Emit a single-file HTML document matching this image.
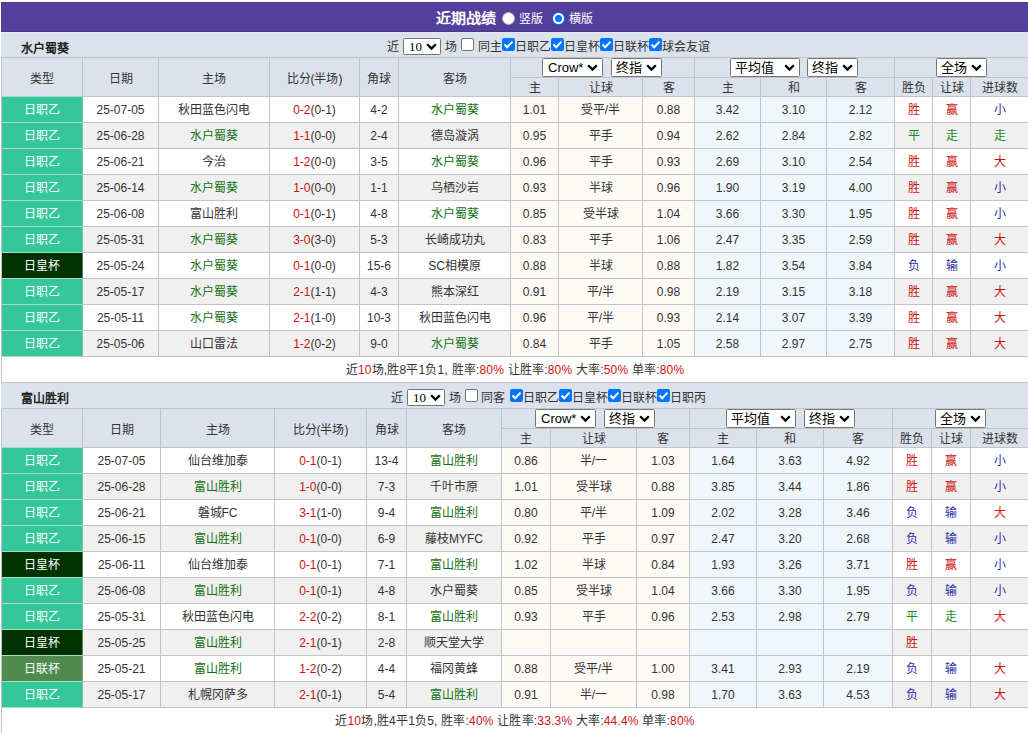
<!DOCTYPE html><html lang="zh-CN"><head><meta charset="utf-8"><style>html,body{margin:0;padding:0;background:#fff;width:1028px;height:733px;overflow:hidden;position:relative;font-family:"Liberation Sans",sans-serif;}.t{position:absolute;text-align:center;white-space:nowrap;overflow:visible}</style></head><body>
<div style="position:absolute;left:1px;top:2px;width:1027px;height:30px;background:#52409c;border-top:1px solid #463c84;border-left:1px solid #463c84;border-bottom:1px solid #463c84;box-sizing:border-box;"></div>
<div style="position:absolute;left:1px;top:32px;width:1027px;height:1px;background:#e4e4fa;"></div>
<div class="t" style="left:436px;top:4px;height:28px;line-height:28px;font-size:15px;font-weight:bold;color:#fff;text-align:left;transform:scaleY(0.9);transform-origin:50% 50%">近期战绩</div>
<div style="position:absolute;left:501.5px;top:12px;width:13px;height:13px;border-radius:50%;background:#fff;box-sizing:border-box;border:1px solid #b0b0c0"></div>
<div class="t" style="left:519px;top:4.5px;height:28px;line-height:28px;font-size:12px;color:#fff;text-align:left">竖版</div>
<div style="position:absolute;left:552px;top:12px;width:13px;height:13px;border-radius:50%;background:#0075ff;"><div style="position:absolute;left:1.2px;top:1.2px;width:10.6px;height:10.6px;border-radius:50%;background:#fff"></div><div style="position:absolute;left:3px;top:3px;width:7px;height:7px;border-radius:50%;background:#0075ff"></div></div>
<div class="t" style="left:569px;top:4.5px;height:28px;line-height:28px;font-size:12px;color:#fff;text-align:left">横版</div>
<div style="position:absolute;left:1px;top:33px;width:1027px;height:24px;background:#dce2eb;"></div>
<div class="t" style="left:21px;top:36.5px;width:100px;height:24px;line-height:24px;color:#222;font-size:12px;font-weight:bold;text-align:left;">水户蜀葵</div>
<div class="t" style="left:387px;top:35px;height:24px;line-height:24px;font-size:12px;color:#333;text-align:left;white-space:nowrap">近</div>
<div style="position:absolute;left:403px;top:38px;width:36px;height:15px;border:1px solid #767676;border-radius:1.5px;background:#fff;"><span style="position:absolute;left:5px;top:0px;line-height:15px;font-size:13px;color:#000;font-family:'Liberation Serif',serif;white-space:nowrap">10</span><svg width="11" height="8" viewBox="0 0 11 8" style="position:absolute;right:3px;top:3.5px"><path d="M1.2 1.3 L5.5 5.6 L9.8 1.3" fill="none" stroke="#000" stroke-width="2.3"/></svg></div>
<div class="t" style="left:445px;top:35px;height:24px;line-height:24px;font-size:12px;color:#333;text-align:left;white-space:nowrap">场</div>
<div style="position:absolute;left:461px;top:38px;width:11px;height:11px;background:#fff;border:1px solid #767676;border-radius:2px;"></div>
<div class="t" style="left:478px;top:35px;height:24px;line-height:24px;font-size:12px;color:#333;text-align:left;white-space:nowrap">同主</div>
<div style="position:absolute;left:502px;top:38px;width:13px;height:13px;background:#0075ff;border-radius:2px;"><svg width="13" height="13" viewBox="0 0 13 13" style="position:absolute;left:0;top:0"><path d="M2.5 6.5 L5.2 9.2 L10.5 3.6" fill="none" stroke="#fff" stroke-width="2"/></svg></div>
<div class="t" style="left:515px;top:35px;height:24px;line-height:24px;font-size:12px;color:#333;text-align:left;white-space:nowrap">日职乙</div>
<div style="position:absolute;left:551px;top:38px;width:13px;height:13px;background:#0075ff;border-radius:2px;"><svg width="13" height="13" viewBox="0 0 13 13" style="position:absolute;left:0;top:0"><path d="M2.5 6.5 L5.2 9.2 L10.5 3.6" fill="none" stroke="#fff" stroke-width="2"/></svg></div>
<div class="t" style="left:564px;top:35px;height:24px;line-height:24px;font-size:12px;color:#333;text-align:left;white-space:nowrap">日皇杯</div>
<div style="position:absolute;left:600px;top:38px;width:13px;height:13px;background:#0075ff;border-radius:2px;"><svg width="13" height="13" viewBox="0 0 13 13" style="position:absolute;left:0;top:0"><path d="M2.5 6.5 L5.2 9.2 L10.5 3.6" fill="none" stroke="#fff" stroke-width="2"/></svg></div>
<div class="t" style="left:613px;top:35px;height:24px;line-height:24px;font-size:12px;color:#333;text-align:left;white-space:nowrap">日联杯</div>
<div style="position:absolute;left:649px;top:38px;width:13px;height:13px;background:#0075ff;border-radius:2px;"><svg width="13" height="13" viewBox="0 0 13 13" style="position:absolute;left:0;top:0"><path d="M2.5 6.5 L5.2 9.2 L10.5 3.6" fill="none" stroke="#fff" stroke-width="2"/></svg></div>
<div class="t" style="left:662px;top:35px;height:24px;line-height:24px;font-size:12px;color:#333;text-align:left;white-space:nowrap">球会友谊</div>
<div style="position:absolute;left:1px;top:57px;width:1028px;height:39px;background:#dce2eb;"></div>
<div style="position:absolute;left:1px;top:57px;width:1028px;height:1px;background:#c0c3c8;"></div>
<div style="position:absolute;left:510px;top:77px;width:518px;height:1px;background:#c0c3c8;"></div>
<div style="position:absolute;left:1px;top:96px;width:1028px;height:1px;background:#c0c3c8;"></div>
<div style="position:absolute;left:1px;top:57px;width:1px;height:39px;background:#c0c3c8;"></div>
<div style="position:absolute;left:82px;top:57px;width:1px;height:39px;background:#c0c3c8;"></div>
<div style="position:absolute;left:158px;top:57px;width:1px;height:39px;background:#c0c3c8;"></div>
<div style="position:absolute;left:269px;top:57px;width:1px;height:39px;background:#c0c3c8;"></div>
<div style="position:absolute;left:359px;top:57px;width:1px;height:39px;background:#c0c3c8;"></div>
<div style="position:absolute;left:398px;top:57px;width:1px;height:39px;background:#c0c3c8;"></div>
<div style="position:absolute;left:510px;top:57px;width:1px;height:39px;background:#c0c3c8;"></div>
<div style="position:absolute;left:694px;top:57px;width:1px;height:39px;background:#c0c3c8;"></div>
<div style="position:absolute;left:894px;top:57px;width:1px;height:39px;background:#c0c3c8;"></div>
<div style="position:absolute;left:558px;top:77px;width:1px;height:19px;background:#c0c3c8;"></div>
<div style="position:absolute;left:642px;top:77px;width:1px;height:19px;background:#c0c3c8;"></div>
<div style="position:absolute;left:760px;top:77px;width:1px;height:19px;background:#c0c3c8;"></div>
<div style="position:absolute;left:826px;top:77px;width:1px;height:19px;background:#c0c3c8;"></div>
<div style="position:absolute;left:932px;top:77px;width:1px;height:19px;background:#c0c3c8;"></div>
<div style="position:absolute;left:970px;top:77px;width:1px;height:19px;background:#c0c3c8;"></div>
<div class="t" style="left:2px;top:60px;width:80px;height:38px;line-height:38px;color:#333;font-size:12px;font-weight:normal;">类型</div>
<div class="t" style="left:83px;top:60px;width:75px;height:38px;line-height:38px;color:#333;font-size:12px;font-weight:normal;">日期</div>
<div class="t" style="left:159px;top:60px;width:110px;height:38px;line-height:38px;color:#333;font-size:12px;font-weight:normal;">主场</div>
<div class="t" style="left:270px;top:60px;width:89px;height:38px;line-height:38px;color:#333;font-size:12px;font-weight:normal;">比分(半场)</div>
<div class="t" style="left:360px;top:60px;width:38px;height:38px;line-height:38px;color:#333;font-size:12px;font-weight:normal;">角球</div>
<div class="t" style="left:399px;top:60px;width:111px;height:38px;line-height:38px;color:#333;font-size:12px;font-weight:normal;">客场</div>
<div class="t" style="left:511px;top:78.5px;width:47px;height:18px;line-height:18px;color:#333;font-size:12px;font-weight:normal;">主</div>
<div class="t" style="left:559px;top:78.5px;width:83px;height:18px;line-height:18px;color:#333;font-size:12px;font-weight:normal;">让球</div>
<div class="t" style="left:643px;top:78.5px;width:51px;height:18px;line-height:18px;color:#333;font-size:12px;font-weight:normal;">客</div>
<div class="t" style="left:695px;top:78.5px;width:65px;height:18px;line-height:18px;color:#333;font-size:12px;font-weight:normal;">主</div>
<div class="t" style="left:761px;top:78.5px;width:65px;height:18px;line-height:18px;color:#333;font-size:12px;font-weight:normal;">和</div>
<div class="t" style="left:827px;top:78.5px;width:67px;height:18px;line-height:18px;color:#333;font-size:12px;font-weight:normal;">客</div>
<div class="t" style="left:895px;top:78.5px;width:37px;height:18px;line-height:18px;color:#333;font-size:12px;font-weight:normal;">胜负</div>
<div class="t" style="left:933px;top:78.5px;width:37px;height:18px;line-height:18px;color:#333;font-size:12px;font-weight:normal;">让球</div>
<div class="t" style="left:971px;top:78.5px;width:57px;height:18px;line-height:18px;color:#333;font-size:12px;font-weight:normal;">进球数</div>
<div style="position:absolute;left:542px;top:58px;width:59px;height:17px;border:1px solid #767676;border-radius:1.5px;background:#fff;"><span style="position:absolute;left:5px;top:0px;line-height:17px;font-size:13px;color:#000;font-family:'Liberation Sans',sans-serif;white-space:nowrap">Crow*</span><svg width="11" height="8" viewBox="0 0 11 8" style="position:absolute;right:4px;top:5px"><path d="M1.2 1.3 L5.5 5.6 L9.8 1.3" fill="none" stroke="#000" stroke-width="2.3"/></svg></div>
<div style="position:absolute;left:611px;top:58px;width:49px;height:17px;border:1px solid #767676;border-radius:1.5px;background:#fff;"><span style="position:absolute;left:4px;top:0px;line-height:17px;font-size:13px;color:#000;font-family:'Liberation Sans',sans-serif;white-space:nowrap">终指</span><svg width="11" height="8" viewBox="0 0 11 8" style="position:absolute;right:4px;top:5px"><path d="M1.2 1.3 L5.5 5.6 L9.8 1.3" fill="none" stroke="#000" stroke-width="2.3"/></svg></div>
<div style="position:absolute;left:730px;top:58px;width:68px;height:17px;border:1px solid #767676;border-radius:1.5px;background:#fff;"><span style="position:absolute;left:4px;top:0px;line-height:17px;font-size:13px;color:#000;font-family:'Liberation Sans',sans-serif;white-space:nowrap">平均值</span><svg width="11" height="8" viewBox="0 0 11 8" style="position:absolute;right:4px;top:5px"><path d="M1.2 1.3 L5.5 5.6 L9.8 1.3" fill="none" stroke="#000" stroke-width="2.3"/></svg></div>
<div style="position:absolute;left:807px;top:58px;width:49px;height:17px;border:1px solid #767676;border-radius:1.5px;background:#fff;"><span style="position:absolute;left:4px;top:0px;line-height:17px;font-size:13px;color:#000;font-family:'Liberation Sans',sans-serif;white-space:nowrap">终指</span><svg width="11" height="8" viewBox="0 0 11 8" style="position:absolute;right:4px;top:5px"><path d="M1.2 1.3 L5.5 5.6 L9.8 1.3" fill="none" stroke="#000" stroke-width="2.3"/></svg></div>
<div style="position:absolute;left:936px;top:58px;width:49px;height:17px;border:1px solid #767676;border-radius:1.5px;background:#fff;"><span style="position:absolute;left:4px;top:0px;line-height:17px;font-size:13px;color:#000;font-family:'Liberation Sans',sans-serif;white-space:nowrap">全场</span><svg width="11" height="8" viewBox="0 0 11 8" style="position:absolute;right:4px;top:5px"><path d="M1.2 1.3 L5.5 5.6 L9.8 1.3" fill="none" stroke="#000" stroke-width="2.3"/></svg></div>
<div style="position:absolute;left:1px;top:97px;width:1028px;height:25px;background:#fff;"></div>
<div style="position:absolute;left:511px;top:97px;width:47px;height:25px;background:#fefaf6;"></div>
<div style="position:absolute;left:559px;top:97px;width:83px;height:25px;background:#fefaf6;"></div>
<div style="position:absolute;left:643px;top:97px;width:51px;height:25px;background:#fefaf6;"></div>
<div style="position:absolute;left:695px;top:97px;width:65px;height:25px;background:#f0f7fb;"></div>
<div style="position:absolute;left:761px;top:97px;width:65px;height:25px;background:#f0f7fb;"></div>
<div style="position:absolute;left:827px;top:97px;width:67px;height:25px;background:#f0f7fb;"></div>
<div style="position:absolute;left:2px;top:97px;width:80px;height:25px;background:#33c799;"></div>
<div style="position:absolute;left:1px;top:122px;width:1028px;height:1px;background:#c0c3c8;"></div>
<div style="position:absolute;left:2px;top:122px;width:80px;height:1px;background:#a6dcc6;"></div>
<div style="position:absolute;left:1px;top:96px;width:1px;height:27px;background:#c0c3c8;"></div>
<div style="position:absolute;left:82px;top:96px;width:1px;height:27px;background:#c0c3c8;"></div>
<div style="position:absolute;left:158px;top:96px;width:1px;height:27px;background:#c0c3c8;"></div>
<div style="position:absolute;left:269px;top:96px;width:1px;height:27px;background:#c0c3c8;"></div>
<div style="position:absolute;left:359px;top:96px;width:1px;height:27px;background:#c0c3c8;"></div>
<div style="position:absolute;left:398px;top:96px;width:1px;height:27px;background:#c0c3c8;"></div>
<div style="position:absolute;left:510px;top:96px;width:1px;height:27px;background:#c0c3c8;"></div>
<div style="position:absolute;left:558px;top:96px;width:1px;height:27px;background:#c0c3c8;"></div>
<div style="position:absolute;left:642px;top:96px;width:1px;height:27px;background:#c0c3c8;"></div>
<div style="position:absolute;left:694px;top:96px;width:1px;height:27px;background:#c0c3c8;"></div>
<div style="position:absolute;left:760px;top:96px;width:1px;height:27px;background:#c0c3c8;"></div>
<div style="position:absolute;left:826px;top:96px;width:1px;height:27px;background:#c0c3c8;"></div>
<div style="position:absolute;left:894px;top:96px;width:1px;height:27px;background:#c0c3c8;"></div>
<div style="position:absolute;left:932px;top:96px;width:1px;height:27px;background:#c0c3c8;"></div>
<div style="position:absolute;left:970px;top:96px;width:1px;height:27px;background:#c0c3c8;"></div>
<div style="position:absolute;left:82px;top:97px;width:1px;height:25px;background:#7ac5b0;"></div>
<div style="position:absolute;left:2px;top:96px;width:80px;height:1px;background:#a6dcc6;"></div>
<div class="t" style="left:2px;top:98px;width:80px;height:25px;line-height:25px;color:#fff;font-size:12px;font-weight:normal;">日职乙</div>
<div class="t" style="left:83px;top:98px;width:75px;height:25px;line-height:25px;color:#333;font-size:12px;font-weight:normal;">25-07-05</div>
<div class="t" style="left:159px;top:98px;width:110px;height:25px;line-height:25px;color:#333;font-size:12px;font-weight:normal;">秋田蓝色闪电</div>
<div class="t" style="left:270px;top:98px;width:89px;height:25px;line-height:25px;color:#333;font-size:12px;font-weight:normal;"><span style="color:#cc1111">0-2</span>(0-1)</div>
<div class="t" style="left:360px;top:98px;width:38px;height:25px;line-height:25px;color:#333;font-size:12px;font-weight:normal;">4-2</div>
<div class="t" style="left:399px;top:98px;width:111px;height:25px;line-height:25px;color:#137013;font-size:12px;font-weight:normal;">水户蜀葵</div>
<div class="t" style="left:511px;top:98px;width:47px;height:25px;line-height:25px;color:#333;font-size:12px;font-weight:normal;">1.01</div>
<div class="t" style="left:559px;top:98px;width:83px;height:25px;line-height:25px;color:#333;font-size:12px;font-weight:normal;">受平/半</div>
<div class="t" style="left:643px;top:98px;width:51px;height:25px;line-height:25px;color:#333;font-size:12px;font-weight:normal;">0.88</div>
<div class="t" style="left:695px;top:98px;width:65px;height:25px;line-height:25px;color:#333;font-size:12px;font-weight:normal;">3.42</div>
<div class="t" style="left:761px;top:98px;width:65px;height:25px;line-height:25px;color:#333;font-size:12px;font-weight:normal;">3.10</div>
<div class="t" style="left:827px;top:98px;width:67px;height:25px;line-height:25px;color:#333;font-size:12px;font-weight:normal;">2.12</div>
<div class="t" style="left:895px;top:98px;width:37px;height:25px;line-height:25px;color:#cc1111;font-size:12px;font-weight:normal;">胜</div>
<div class="t" style="left:933px;top:98px;width:37px;height:25px;line-height:25px;color:#cc1111;font-size:12px;font-weight:normal;">赢</div>
<div class="t" style="left:971px;top:98px;width:57px;height:25px;line-height:25px;color:#2a2aaa;font-size:12px;font-weight:normal;">小</div>
<div style="position:absolute;left:1px;top:123px;width:1028px;height:25px;background:#f0f0f0;"></div>
<div style="position:absolute;left:511px;top:123px;width:47px;height:25px;background:#fefaf6;"></div>
<div style="position:absolute;left:559px;top:123px;width:83px;height:25px;background:#fefaf6;"></div>
<div style="position:absolute;left:643px;top:123px;width:51px;height:25px;background:#fefaf6;"></div>
<div style="position:absolute;left:695px;top:123px;width:65px;height:25px;background:#f0f7fb;"></div>
<div style="position:absolute;left:761px;top:123px;width:65px;height:25px;background:#f0f7fb;"></div>
<div style="position:absolute;left:827px;top:123px;width:67px;height:25px;background:#f0f7fb;"></div>
<div style="position:absolute;left:2px;top:123px;width:80px;height:25px;background:#33c799;"></div>
<div style="position:absolute;left:1px;top:148px;width:1028px;height:1px;background:#c0c3c8;"></div>
<div style="position:absolute;left:2px;top:148px;width:80px;height:1px;background:#a6dcc6;"></div>
<div style="position:absolute;left:1px;top:122px;width:1px;height:27px;background:#c0c3c8;"></div>
<div style="position:absolute;left:82px;top:122px;width:1px;height:27px;background:#c0c3c8;"></div>
<div style="position:absolute;left:158px;top:122px;width:1px;height:27px;background:#c0c3c8;"></div>
<div style="position:absolute;left:269px;top:122px;width:1px;height:27px;background:#c0c3c8;"></div>
<div style="position:absolute;left:359px;top:122px;width:1px;height:27px;background:#c0c3c8;"></div>
<div style="position:absolute;left:398px;top:122px;width:1px;height:27px;background:#c0c3c8;"></div>
<div style="position:absolute;left:510px;top:122px;width:1px;height:27px;background:#c0c3c8;"></div>
<div style="position:absolute;left:558px;top:122px;width:1px;height:27px;background:#c0c3c8;"></div>
<div style="position:absolute;left:642px;top:122px;width:1px;height:27px;background:#c0c3c8;"></div>
<div style="position:absolute;left:694px;top:122px;width:1px;height:27px;background:#c0c3c8;"></div>
<div style="position:absolute;left:760px;top:122px;width:1px;height:27px;background:#c0c3c8;"></div>
<div style="position:absolute;left:826px;top:122px;width:1px;height:27px;background:#c0c3c8;"></div>
<div style="position:absolute;left:894px;top:122px;width:1px;height:27px;background:#c0c3c8;"></div>
<div style="position:absolute;left:932px;top:122px;width:1px;height:27px;background:#c0c3c8;"></div>
<div style="position:absolute;left:970px;top:122px;width:1px;height:27px;background:#c0c3c8;"></div>
<div style="position:absolute;left:82px;top:123px;width:1px;height:25px;background:#7ac5b0;"></div>
<div class="t" style="left:2px;top:124px;width:80px;height:25px;line-height:25px;color:#fff;font-size:12px;font-weight:normal;">日职乙</div>
<div class="t" style="left:83px;top:124px;width:75px;height:25px;line-height:25px;color:#333;font-size:12px;font-weight:normal;">25-06-28</div>
<div class="t" style="left:159px;top:124px;width:110px;height:25px;line-height:25px;color:#137013;font-size:12px;font-weight:normal;">水户蜀葵</div>
<div class="t" style="left:270px;top:124px;width:89px;height:25px;line-height:25px;color:#333;font-size:12px;font-weight:normal;"><span style="color:#cc1111">1-1</span>(0-0)</div>
<div class="t" style="left:360px;top:124px;width:38px;height:25px;line-height:25px;color:#333;font-size:12px;font-weight:normal;">2-4</div>
<div class="t" style="left:399px;top:124px;width:111px;height:25px;line-height:25px;color:#333;font-size:12px;font-weight:normal;">德岛漩涡</div>
<div class="t" style="left:511px;top:124px;width:47px;height:25px;line-height:25px;color:#333;font-size:12px;font-weight:normal;">0.95</div>
<div class="t" style="left:559px;top:124px;width:83px;height:25px;line-height:25px;color:#333;font-size:12px;font-weight:normal;">平手</div>
<div class="t" style="left:643px;top:124px;width:51px;height:25px;line-height:25px;color:#333;font-size:12px;font-weight:normal;">0.94</div>
<div class="t" style="left:695px;top:124px;width:65px;height:25px;line-height:25px;color:#333;font-size:12px;font-weight:normal;">2.62</div>
<div class="t" style="left:761px;top:124px;width:65px;height:25px;line-height:25px;color:#333;font-size:12px;font-weight:normal;">2.84</div>
<div class="t" style="left:827px;top:124px;width:67px;height:25px;line-height:25px;color:#333;font-size:12px;font-weight:normal;">2.82</div>
<div class="t" style="left:895px;top:124px;width:37px;height:25px;line-height:25px;color:#1f881f;font-size:12px;font-weight:normal;">平</div>
<div class="t" style="left:933px;top:124px;width:37px;height:25px;line-height:25px;color:#1f881f;font-size:12px;font-weight:normal;">走</div>
<div class="t" style="left:971px;top:124px;width:57px;height:25px;line-height:25px;color:#1f881f;font-size:12px;font-weight:normal;">走</div>
<div style="position:absolute;left:1px;top:149px;width:1028px;height:25px;background:#fff;"></div>
<div style="position:absolute;left:511px;top:149px;width:47px;height:25px;background:#fefaf6;"></div>
<div style="position:absolute;left:559px;top:149px;width:83px;height:25px;background:#fefaf6;"></div>
<div style="position:absolute;left:643px;top:149px;width:51px;height:25px;background:#fefaf6;"></div>
<div style="position:absolute;left:695px;top:149px;width:65px;height:25px;background:#f0f7fb;"></div>
<div style="position:absolute;left:761px;top:149px;width:65px;height:25px;background:#f0f7fb;"></div>
<div style="position:absolute;left:827px;top:149px;width:67px;height:25px;background:#f0f7fb;"></div>
<div style="position:absolute;left:2px;top:149px;width:80px;height:25px;background:#33c799;"></div>
<div style="position:absolute;left:1px;top:174px;width:1028px;height:1px;background:#c0c3c8;"></div>
<div style="position:absolute;left:2px;top:174px;width:80px;height:1px;background:#a6dcc6;"></div>
<div style="position:absolute;left:1px;top:148px;width:1px;height:27px;background:#c0c3c8;"></div>
<div style="position:absolute;left:82px;top:148px;width:1px;height:27px;background:#c0c3c8;"></div>
<div style="position:absolute;left:158px;top:148px;width:1px;height:27px;background:#c0c3c8;"></div>
<div style="position:absolute;left:269px;top:148px;width:1px;height:27px;background:#c0c3c8;"></div>
<div style="position:absolute;left:359px;top:148px;width:1px;height:27px;background:#c0c3c8;"></div>
<div style="position:absolute;left:398px;top:148px;width:1px;height:27px;background:#c0c3c8;"></div>
<div style="position:absolute;left:510px;top:148px;width:1px;height:27px;background:#c0c3c8;"></div>
<div style="position:absolute;left:558px;top:148px;width:1px;height:27px;background:#c0c3c8;"></div>
<div style="position:absolute;left:642px;top:148px;width:1px;height:27px;background:#c0c3c8;"></div>
<div style="position:absolute;left:694px;top:148px;width:1px;height:27px;background:#c0c3c8;"></div>
<div style="position:absolute;left:760px;top:148px;width:1px;height:27px;background:#c0c3c8;"></div>
<div style="position:absolute;left:826px;top:148px;width:1px;height:27px;background:#c0c3c8;"></div>
<div style="position:absolute;left:894px;top:148px;width:1px;height:27px;background:#c0c3c8;"></div>
<div style="position:absolute;left:932px;top:148px;width:1px;height:27px;background:#c0c3c8;"></div>
<div style="position:absolute;left:970px;top:148px;width:1px;height:27px;background:#c0c3c8;"></div>
<div style="position:absolute;left:82px;top:149px;width:1px;height:25px;background:#7ac5b0;"></div>
<div class="t" style="left:2px;top:150px;width:80px;height:25px;line-height:25px;color:#fff;font-size:12px;font-weight:normal;">日职乙</div>
<div class="t" style="left:83px;top:150px;width:75px;height:25px;line-height:25px;color:#333;font-size:12px;font-weight:normal;">25-06-21</div>
<div class="t" style="left:159px;top:150px;width:110px;height:25px;line-height:25px;color:#333;font-size:12px;font-weight:normal;">今治</div>
<div class="t" style="left:270px;top:150px;width:89px;height:25px;line-height:25px;color:#333;font-size:12px;font-weight:normal;"><span style="color:#cc1111">1-2</span>(0-0)</div>
<div class="t" style="left:360px;top:150px;width:38px;height:25px;line-height:25px;color:#333;font-size:12px;font-weight:normal;">3-5</div>
<div class="t" style="left:399px;top:150px;width:111px;height:25px;line-height:25px;color:#137013;font-size:12px;font-weight:normal;">水户蜀葵</div>
<div class="t" style="left:511px;top:150px;width:47px;height:25px;line-height:25px;color:#333;font-size:12px;font-weight:normal;">0.96</div>
<div class="t" style="left:559px;top:150px;width:83px;height:25px;line-height:25px;color:#333;font-size:12px;font-weight:normal;">平手</div>
<div class="t" style="left:643px;top:150px;width:51px;height:25px;line-height:25px;color:#333;font-size:12px;font-weight:normal;">0.93</div>
<div class="t" style="left:695px;top:150px;width:65px;height:25px;line-height:25px;color:#333;font-size:12px;font-weight:normal;">2.69</div>
<div class="t" style="left:761px;top:150px;width:65px;height:25px;line-height:25px;color:#333;font-size:12px;font-weight:normal;">3.10</div>
<div class="t" style="left:827px;top:150px;width:67px;height:25px;line-height:25px;color:#333;font-size:12px;font-weight:normal;">2.54</div>
<div class="t" style="left:895px;top:150px;width:37px;height:25px;line-height:25px;color:#cc1111;font-size:12px;font-weight:normal;">胜</div>
<div class="t" style="left:933px;top:150px;width:37px;height:25px;line-height:25px;color:#cc1111;font-size:12px;font-weight:normal;">赢</div>
<div class="t" style="left:971px;top:150px;width:57px;height:25px;line-height:25px;color:#cc1111;font-size:12px;font-weight:normal;">大</div>
<div style="position:absolute;left:1px;top:175px;width:1028px;height:25px;background:#f0f0f0;"></div>
<div style="position:absolute;left:511px;top:175px;width:47px;height:25px;background:#fefaf6;"></div>
<div style="position:absolute;left:559px;top:175px;width:83px;height:25px;background:#fefaf6;"></div>
<div style="position:absolute;left:643px;top:175px;width:51px;height:25px;background:#fefaf6;"></div>
<div style="position:absolute;left:695px;top:175px;width:65px;height:25px;background:#f0f7fb;"></div>
<div style="position:absolute;left:761px;top:175px;width:65px;height:25px;background:#f0f7fb;"></div>
<div style="position:absolute;left:827px;top:175px;width:67px;height:25px;background:#f0f7fb;"></div>
<div style="position:absolute;left:2px;top:175px;width:80px;height:25px;background:#33c799;"></div>
<div style="position:absolute;left:1px;top:200px;width:1028px;height:1px;background:#c0c3c8;"></div>
<div style="position:absolute;left:2px;top:200px;width:80px;height:1px;background:#a6dcc6;"></div>
<div style="position:absolute;left:1px;top:174px;width:1px;height:27px;background:#c0c3c8;"></div>
<div style="position:absolute;left:82px;top:174px;width:1px;height:27px;background:#c0c3c8;"></div>
<div style="position:absolute;left:158px;top:174px;width:1px;height:27px;background:#c0c3c8;"></div>
<div style="position:absolute;left:269px;top:174px;width:1px;height:27px;background:#c0c3c8;"></div>
<div style="position:absolute;left:359px;top:174px;width:1px;height:27px;background:#c0c3c8;"></div>
<div style="position:absolute;left:398px;top:174px;width:1px;height:27px;background:#c0c3c8;"></div>
<div style="position:absolute;left:510px;top:174px;width:1px;height:27px;background:#c0c3c8;"></div>
<div style="position:absolute;left:558px;top:174px;width:1px;height:27px;background:#c0c3c8;"></div>
<div style="position:absolute;left:642px;top:174px;width:1px;height:27px;background:#c0c3c8;"></div>
<div style="position:absolute;left:694px;top:174px;width:1px;height:27px;background:#c0c3c8;"></div>
<div style="position:absolute;left:760px;top:174px;width:1px;height:27px;background:#c0c3c8;"></div>
<div style="position:absolute;left:826px;top:174px;width:1px;height:27px;background:#c0c3c8;"></div>
<div style="position:absolute;left:894px;top:174px;width:1px;height:27px;background:#c0c3c8;"></div>
<div style="position:absolute;left:932px;top:174px;width:1px;height:27px;background:#c0c3c8;"></div>
<div style="position:absolute;left:970px;top:174px;width:1px;height:27px;background:#c0c3c8;"></div>
<div style="position:absolute;left:82px;top:175px;width:1px;height:25px;background:#7ac5b0;"></div>
<div class="t" style="left:2px;top:176px;width:80px;height:25px;line-height:25px;color:#fff;font-size:12px;font-weight:normal;">日职乙</div>
<div class="t" style="left:83px;top:176px;width:75px;height:25px;line-height:25px;color:#333;font-size:12px;font-weight:normal;">25-06-14</div>
<div class="t" style="left:159px;top:176px;width:110px;height:25px;line-height:25px;color:#137013;font-size:12px;font-weight:normal;">水户蜀葵</div>
<div class="t" style="left:270px;top:176px;width:89px;height:25px;line-height:25px;color:#333;font-size:12px;font-weight:normal;"><span style="color:#cc1111">1-0</span>(0-0)</div>
<div class="t" style="left:360px;top:176px;width:38px;height:25px;line-height:25px;color:#333;font-size:12px;font-weight:normal;">1-1</div>
<div class="t" style="left:399px;top:176px;width:111px;height:25px;line-height:25px;color:#333;font-size:12px;font-weight:normal;">乌栖沙岩</div>
<div class="t" style="left:511px;top:176px;width:47px;height:25px;line-height:25px;color:#333;font-size:12px;font-weight:normal;">0.93</div>
<div class="t" style="left:559px;top:176px;width:83px;height:25px;line-height:25px;color:#333;font-size:12px;font-weight:normal;">半球</div>
<div class="t" style="left:643px;top:176px;width:51px;height:25px;line-height:25px;color:#333;font-size:12px;font-weight:normal;">0.96</div>
<div class="t" style="left:695px;top:176px;width:65px;height:25px;line-height:25px;color:#333;font-size:12px;font-weight:normal;">1.90</div>
<div class="t" style="left:761px;top:176px;width:65px;height:25px;line-height:25px;color:#333;font-size:12px;font-weight:normal;">3.19</div>
<div class="t" style="left:827px;top:176px;width:67px;height:25px;line-height:25px;color:#333;font-size:12px;font-weight:normal;">4.00</div>
<div class="t" style="left:895px;top:176px;width:37px;height:25px;line-height:25px;color:#cc1111;font-size:12px;font-weight:normal;">胜</div>
<div class="t" style="left:933px;top:176px;width:37px;height:25px;line-height:25px;color:#cc1111;font-size:12px;font-weight:normal;">赢</div>
<div class="t" style="left:971px;top:176px;width:57px;height:25px;line-height:25px;color:#2a2aaa;font-size:12px;font-weight:normal;">小</div>
<div style="position:absolute;left:1px;top:201px;width:1028px;height:25px;background:#fff;"></div>
<div style="position:absolute;left:511px;top:201px;width:47px;height:25px;background:#fefaf6;"></div>
<div style="position:absolute;left:559px;top:201px;width:83px;height:25px;background:#fefaf6;"></div>
<div style="position:absolute;left:643px;top:201px;width:51px;height:25px;background:#fefaf6;"></div>
<div style="position:absolute;left:695px;top:201px;width:65px;height:25px;background:#f0f7fb;"></div>
<div style="position:absolute;left:761px;top:201px;width:65px;height:25px;background:#f0f7fb;"></div>
<div style="position:absolute;left:827px;top:201px;width:67px;height:25px;background:#f0f7fb;"></div>
<div style="position:absolute;left:2px;top:201px;width:80px;height:25px;background:#33c799;"></div>
<div style="position:absolute;left:1px;top:226px;width:1028px;height:1px;background:#c0c3c8;"></div>
<div style="position:absolute;left:2px;top:226px;width:80px;height:1px;background:#a6dcc6;"></div>
<div style="position:absolute;left:1px;top:200px;width:1px;height:27px;background:#c0c3c8;"></div>
<div style="position:absolute;left:82px;top:200px;width:1px;height:27px;background:#c0c3c8;"></div>
<div style="position:absolute;left:158px;top:200px;width:1px;height:27px;background:#c0c3c8;"></div>
<div style="position:absolute;left:269px;top:200px;width:1px;height:27px;background:#c0c3c8;"></div>
<div style="position:absolute;left:359px;top:200px;width:1px;height:27px;background:#c0c3c8;"></div>
<div style="position:absolute;left:398px;top:200px;width:1px;height:27px;background:#c0c3c8;"></div>
<div style="position:absolute;left:510px;top:200px;width:1px;height:27px;background:#c0c3c8;"></div>
<div style="position:absolute;left:558px;top:200px;width:1px;height:27px;background:#c0c3c8;"></div>
<div style="position:absolute;left:642px;top:200px;width:1px;height:27px;background:#c0c3c8;"></div>
<div style="position:absolute;left:694px;top:200px;width:1px;height:27px;background:#c0c3c8;"></div>
<div style="position:absolute;left:760px;top:200px;width:1px;height:27px;background:#c0c3c8;"></div>
<div style="position:absolute;left:826px;top:200px;width:1px;height:27px;background:#c0c3c8;"></div>
<div style="position:absolute;left:894px;top:200px;width:1px;height:27px;background:#c0c3c8;"></div>
<div style="position:absolute;left:932px;top:200px;width:1px;height:27px;background:#c0c3c8;"></div>
<div style="position:absolute;left:970px;top:200px;width:1px;height:27px;background:#c0c3c8;"></div>
<div style="position:absolute;left:82px;top:201px;width:1px;height:25px;background:#7ac5b0;"></div>
<div class="t" style="left:2px;top:202px;width:80px;height:25px;line-height:25px;color:#fff;font-size:12px;font-weight:normal;">日职乙</div>
<div class="t" style="left:83px;top:202px;width:75px;height:25px;line-height:25px;color:#333;font-size:12px;font-weight:normal;">25-06-08</div>
<div class="t" style="left:159px;top:202px;width:110px;height:25px;line-height:25px;color:#333;font-size:12px;font-weight:normal;">富山胜利</div>
<div class="t" style="left:270px;top:202px;width:89px;height:25px;line-height:25px;color:#333;font-size:12px;font-weight:normal;"><span style="color:#cc1111">0-1</span>(0-1)</div>
<div class="t" style="left:360px;top:202px;width:38px;height:25px;line-height:25px;color:#333;font-size:12px;font-weight:normal;">4-8</div>
<div class="t" style="left:399px;top:202px;width:111px;height:25px;line-height:25px;color:#137013;font-size:12px;font-weight:normal;">水户蜀葵</div>
<div class="t" style="left:511px;top:202px;width:47px;height:25px;line-height:25px;color:#333;font-size:12px;font-weight:normal;">0.85</div>
<div class="t" style="left:559px;top:202px;width:83px;height:25px;line-height:25px;color:#333;font-size:12px;font-weight:normal;">受半球</div>
<div class="t" style="left:643px;top:202px;width:51px;height:25px;line-height:25px;color:#333;font-size:12px;font-weight:normal;">1.04</div>
<div class="t" style="left:695px;top:202px;width:65px;height:25px;line-height:25px;color:#333;font-size:12px;font-weight:normal;">3.66</div>
<div class="t" style="left:761px;top:202px;width:65px;height:25px;line-height:25px;color:#333;font-size:12px;font-weight:normal;">3.30</div>
<div class="t" style="left:827px;top:202px;width:67px;height:25px;line-height:25px;color:#333;font-size:12px;font-weight:normal;">1.95</div>
<div class="t" style="left:895px;top:202px;width:37px;height:25px;line-height:25px;color:#cc1111;font-size:12px;font-weight:normal;">胜</div>
<div class="t" style="left:933px;top:202px;width:37px;height:25px;line-height:25px;color:#cc1111;font-size:12px;font-weight:normal;">赢</div>
<div class="t" style="left:971px;top:202px;width:57px;height:25px;line-height:25px;color:#2a2aaa;font-size:12px;font-weight:normal;">小</div>
<div style="position:absolute;left:1px;top:227px;width:1028px;height:25px;background:#f0f0f0;"></div>
<div style="position:absolute;left:511px;top:227px;width:47px;height:25px;background:#fefaf6;"></div>
<div style="position:absolute;left:559px;top:227px;width:83px;height:25px;background:#fefaf6;"></div>
<div style="position:absolute;left:643px;top:227px;width:51px;height:25px;background:#fefaf6;"></div>
<div style="position:absolute;left:695px;top:227px;width:65px;height:25px;background:#f0f7fb;"></div>
<div style="position:absolute;left:761px;top:227px;width:65px;height:25px;background:#f0f7fb;"></div>
<div style="position:absolute;left:827px;top:227px;width:67px;height:25px;background:#f0f7fb;"></div>
<div style="position:absolute;left:2px;top:227px;width:80px;height:25px;background:#33c799;"></div>
<div style="position:absolute;left:1px;top:252px;width:1028px;height:1px;background:#c0c3c8;"></div>
<div style="position:absolute;left:2px;top:252px;width:80px;height:1px;background:#a6dcc6;"></div>
<div style="position:absolute;left:1px;top:226px;width:1px;height:27px;background:#c0c3c8;"></div>
<div style="position:absolute;left:82px;top:226px;width:1px;height:27px;background:#c0c3c8;"></div>
<div style="position:absolute;left:158px;top:226px;width:1px;height:27px;background:#c0c3c8;"></div>
<div style="position:absolute;left:269px;top:226px;width:1px;height:27px;background:#c0c3c8;"></div>
<div style="position:absolute;left:359px;top:226px;width:1px;height:27px;background:#c0c3c8;"></div>
<div style="position:absolute;left:398px;top:226px;width:1px;height:27px;background:#c0c3c8;"></div>
<div style="position:absolute;left:510px;top:226px;width:1px;height:27px;background:#c0c3c8;"></div>
<div style="position:absolute;left:558px;top:226px;width:1px;height:27px;background:#c0c3c8;"></div>
<div style="position:absolute;left:642px;top:226px;width:1px;height:27px;background:#c0c3c8;"></div>
<div style="position:absolute;left:694px;top:226px;width:1px;height:27px;background:#c0c3c8;"></div>
<div style="position:absolute;left:760px;top:226px;width:1px;height:27px;background:#c0c3c8;"></div>
<div style="position:absolute;left:826px;top:226px;width:1px;height:27px;background:#c0c3c8;"></div>
<div style="position:absolute;left:894px;top:226px;width:1px;height:27px;background:#c0c3c8;"></div>
<div style="position:absolute;left:932px;top:226px;width:1px;height:27px;background:#c0c3c8;"></div>
<div style="position:absolute;left:970px;top:226px;width:1px;height:27px;background:#c0c3c8;"></div>
<div style="position:absolute;left:82px;top:227px;width:1px;height:25px;background:#7ac5b0;"></div>
<div class="t" style="left:2px;top:228px;width:80px;height:25px;line-height:25px;color:#fff;font-size:12px;font-weight:normal;">日职乙</div>
<div class="t" style="left:83px;top:228px;width:75px;height:25px;line-height:25px;color:#333;font-size:12px;font-weight:normal;">25-05-31</div>
<div class="t" style="left:159px;top:228px;width:110px;height:25px;line-height:25px;color:#137013;font-size:12px;font-weight:normal;">水户蜀葵</div>
<div class="t" style="left:270px;top:228px;width:89px;height:25px;line-height:25px;color:#333;font-size:12px;font-weight:normal;"><span style="color:#cc1111">3-0</span>(3-0)</div>
<div class="t" style="left:360px;top:228px;width:38px;height:25px;line-height:25px;color:#333;font-size:12px;font-weight:normal;">5-3</div>
<div class="t" style="left:399px;top:228px;width:111px;height:25px;line-height:25px;color:#333;font-size:12px;font-weight:normal;">长崎成功丸</div>
<div class="t" style="left:511px;top:228px;width:47px;height:25px;line-height:25px;color:#333;font-size:12px;font-weight:normal;">0.83</div>
<div class="t" style="left:559px;top:228px;width:83px;height:25px;line-height:25px;color:#333;font-size:12px;font-weight:normal;">平手</div>
<div class="t" style="left:643px;top:228px;width:51px;height:25px;line-height:25px;color:#333;font-size:12px;font-weight:normal;">1.06</div>
<div class="t" style="left:695px;top:228px;width:65px;height:25px;line-height:25px;color:#333;font-size:12px;font-weight:normal;">2.47</div>
<div class="t" style="left:761px;top:228px;width:65px;height:25px;line-height:25px;color:#333;font-size:12px;font-weight:normal;">3.35</div>
<div class="t" style="left:827px;top:228px;width:67px;height:25px;line-height:25px;color:#333;font-size:12px;font-weight:normal;">2.59</div>
<div class="t" style="left:895px;top:228px;width:37px;height:25px;line-height:25px;color:#cc1111;font-size:12px;font-weight:normal;">胜</div>
<div class="t" style="left:933px;top:228px;width:37px;height:25px;line-height:25px;color:#cc1111;font-size:12px;font-weight:normal;">赢</div>
<div class="t" style="left:971px;top:228px;width:57px;height:25px;line-height:25px;color:#cc1111;font-size:12px;font-weight:normal;">大</div>
<div style="position:absolute;left:1px;top:253px;width:1028px;height:25px;background:#fff;"></div>
<div style="position:absolute;left:511px;top:253px;width:47px;height:25px;background:#fefaf6;"></div>
<div style="position:absolute;left:559px;top:253px;width:83px;height:25px;background:#fefaf6;"></div>
<div style="position:absolute;left:643px;top:253px;width:51px;height:25px;background:#fefaf6;"></div>
<div style="position:absolute;left:695px;top:253px;width:65px;height:25px;background:#f0f7fb;"></div>
<div style="position:absolute;left:761px;top:253px;width:65px;height:25px;background:#f0f7fb;"></div>
<div style="position:absolute;left:827px;top:253px;width:67px;height:25px;background:#f0f7fb;"></div>
<div style="position:absolute;left:2px;top:253px;width:80px;height:25px;background:#003300;"></div>
<div style="position:absolute;left:1px;top:278px;width:1028px;height:1px;background:#c0c3c8;"></div>
<div style="position:absolute;left:2px;top:278px;width:80px;height:1px;background:#a6dcc6;"></div>
<div style="position:absolute;left:1px;top:252px;width:1px;height:27px;background:#c0c3c8;"></div>
<div style="position:absolute;left:82px;top:252px;width:1px;height:27px;background:#c0c3c8;"></div>
<div style="position:absolute;left:158px;top:252px;width:1px;height:27px;background:#c0c3c8;"></div>
<div style="position:absolute;left:269px;top:252px;width:1px;height:27px;background:#c0c3c8;"></div>
<div style="position:absolute;left:359px;top:252px;width:1px;height:27px;background:#c0c3c8;"></div>
<div style="position:absolute;left:398px;top:252px;width:1px;height:27px;background:#c0c3c8;"></div>
<div style="position:absolute;left:510px;top:252px;width:1px;height:27px;background:#c0c3c8;"></div>
<div style="position:absolute;left:558px;top:252px;width:1px;height:27px;background:#c0c3c8;"></div>
<div style="position:absolute;left:642px;top:252px;width:1px;height:27px;background:#c0c3c8;"></div>
<div style="position:absolute;left:694px;top:252px;width:1px;height:27px;background:#c0c3c8;"></div>
<div style="position:absolute;left:760px;top:252px;width:1px;height:27px;background:#c0c3c8;"></div>
<div style="position:absolute;left:826px;top:252px;width:1px;height:27px;background:#c0c3c8;"></div>
<div style="position:absolute;left:894px;top:252px;width:1px;height:27px;background:#c0c3c8;"></div>
<div style="position:absolute;left:932px;top:252px;width:1px;height:27px;background:#c0c3c8;"></div>
<div style="position:absolute;left:970px;top:252px;width:1px;height:27px;background:#c0c3c8;"></div>
<div style="position:absolute;left:82px;top:253px;width:1px;height:25px;background:#607b64;"></div>
<div class="t" style="left:2px;top:254px;width:80px;height:25px;line-height:25px;color:#fff;font-size:12px;font-weight:normal;">日皇杯</div>
<div class="t" style="left:83px;top:254px;width:75px;height:25px;line-height:25px;color:#333;font-size:12px;font-weight:normal;">25-05-24</div>
<div class="t" style="left:159px;top:254px;width:110px;height:25px;line-height:25px;color:#137013;font-size:12px;font-weight:normal;">水户蜀葵</div>
<div class="t" style="left:270px;top:254px;width:89px;height:25px;line-height:25px;color:#333;font-size:12px;font-weight:normal;"><span style="color:#cc1111">0-1</span>(0-0)</div>
<div class="t" style="left:360px;top:254px;width:38px;height:25px;line-height:25px;color:#333;font-size:12px;font-weight:normal;">15-6</div>
<div class="t" style="left:399px;top:254px;width:111px;height:25px;line-height:25px;color:#333;font-size:12px;font-weight:normal;">SC相模原</div>
<div class="t" style="left:511px;top:254px;width:47px;height:25px;line-height:25px;color:#333;font-size:12px;font-weight:normal;">0.88</div>
<div class="t" style="left:559px;top:254px;width:83px;height:25px;line-height:25px;color:#333;font-size:12px;font-weight:normal;">半球</div>
<div class="t" style="left:643px;top:254px;width:51px;height:25px;line-height:25px;color:#333;font-size:12px;font-weight:normal;">0.88</div>
<div class="t" style="left:695px;top:254px;width:65px;height:25px;line-height:25px;color:#333;font-size:12px;font-weight:normal;">1.82</div>
<div class="t" style="left:761px;top:254px;width:65px;height:25px;line-height:25px;color:#333;font-size:12px;font-weight:normal;">3.54</div>
<div class="t" style="left:827px;top:254px;width:67px;height:25px;line-height:25px;color:#333;font-size:12px;font-weight:normal;">3.84</div>
<div class="t" style="left:895px;top:254px;width:37px;height:25px;line-height:25px;color:#2a2aaa;font-size:12px;font-weight:normal;">负</div>
<div class="t" style="left:933px;top:254px;width:37px;height:25px;line-height:25px;color:#2a2aaa;font-size:12px;font-weight:normal;">输</div>
<div class="t" style="left:971px;top:254px;width:57px;height:25px;line-height:25px;color:#2a2aaa;font-size:12px;font-weight:normal;">小</div>
<div style="position:absolute;left:1px;top:279px;width:1028px;height:25px;background:#f0f0f0;"></div>
<div style="position:absolute;left:511px;top:279px;width:47px;height:25px;background:#fefaf6;"></div>
<div style="position:absolute;left:559px;top:279px;width:83px;height:25px;background:#fefaf6;"></div>
<div style="position:absolute;left:643px;top:279px;width:51px;height:25px;background:#fefaf6;"></div>
<div style="position:absolute;left:695px;top:279px;width:65px;height:25px;background:#f0f7fb;"></div>
<div style="position:absolute;left:761px;top:279px;width:65px;height:25px;background:#f0f7fb;"></div>
<div style="position:absolute;left:827px;top:279px;width:67px;height:25px;background:#f0f7fb;"></div>
<div style="position:absolute;left:2px;top:279px;width:80px;height:25px;background:#33c799;"></div>
<div style="position:absolute;left:1px;top:304px;width:1028px;height:1px;background:#c0c3c8;"></div>
<div style="position:absolute;left:2px;top:304px;width:80px;height:1px;background:#a6dcc6;"></div>
<div style="position:absolute;left:1px;top:278px;width:1px;height:27px;background:#c0c3c8;"></div>
<div style="position:absolute;left:82px;top:278px;width:1px;height:27px;background:#c0c3c8;"></div>
<div style="position:absolute;left:158px;top:278px;width:1px;height:27px;background:#c0c3c8;"></div>
<div style="position:absolute;left:269px;top:278px;width:1px;height:27px;background:#c0c3c8;"></div>
<div style="position:absolute;left:359px;top:278px;width:1px;height:27px;background:#c0c3c8;"></div>
<div style="position:absolute;left:398px;top:278px;width:1px;height:27px;background:#c0c3c8;"></div>
<div style="position:absolute;left:510px;top:278px;width:1px;height:27px;background:#c0c3c8;"></div>
<div style="position:absolute;left:558px;top:278px;width:1px;height:27px;background:#c0c3c8;"></div>
<div style="position:absolute;left:642px;top:278px;width:1px;height:27px;background:#c0c3c8;"></div>
<div style="position:absolute;left:694px;top:278px;width:1px;height:27px;background:#c0c3c8;"></div>
<div style="position:absolute;left:760px;top:278px;width:1px;height:27px;background:#c0c3c8;"></div>
<div style="position:absolute;left:826px;top:278px;width:1px;height:27px;background:#c0c3c8;"></div>
<div style="position:absolute;left:894px;top:278px;width:1px;height:27px;background:#c0c3c8;"></div>
<div style="position:absolute;left:932px;top:278px;width:1px;height:27px;background:#c0c3c8;"></div>
<div style="position:absolute;left:970px;top:278px;width:1px;height:27px;background:#c0c3c8;"></div>
<div style="position:absolute;left:82px;top:279px;width:1px;height:25px;background:#7ac5b0;"></div>
<div class="t" style="left:2px;top:280px;width:80px;height:25px;line-height:25px;color:#fff;font-size:12px;font-weight:normal;">日职乙</div>
<div class="t" style="left:83px;top:280px;width:75px;height:25px;line-height:25px;color:#333;font-size:12px;font-weight:normal;">25-05-17</div>
<div class="t" style="left:159px;top:280px;width:110px;height:25px;line-height:25px;color:#137013;font-size:12px;font-weight:normal;">水户蜀葵</div>
<div class="t" style="left:270px;top:280px;width:89px;height:25px;line-height:25px;color:#333;font-size:12px;font-weight:normal;"><span style="color:#cc1111">2-1</span>(1-1)</div>
<div class="t" style="left:360px;top:280px;width:38px;height:25px;line-height:25px;color:#333;font-size:12px;font-weight:normal;">4-3</div>
<div class="t" style="left:399px;top:280px;width:111px;height:25px;line-height:25px;color:#333;font-size:12px;font-weight:normal;">熊本深红</div>
<div class="t" style="left:511px;top:280px;width:47px;height:25px;line-height:25px;color:#333;font-size:12px;font-weight:normal;">0.91</div>
<div class="t" style="left:559px;top:280px;width:83px;height:25px;line-height:25px;color:#333;font-size:12px;font-weight:normal;">平/半</div>
<div class="t" style="left:643px;top:280px;width:51px;height:25px;line-height:25px;color:#333;font-size:12px;font-weight:normal;">0.98</div>
<div class="t" style="left:695px;top:280px;width:65px;height:25px;line-height:25px;color:#333;font-size:12px;font-weight:normal;">2.19</div>
<div class="t" style="left:761px;top:280px;width:65px;height:25px;line-height:25px;color:#333;font-size:12px;font-weight:normal;">3.15</div>
<div class="t" style="left:827px;top:280px;width:67px;height:25px;line-height:25px;color:#333;font-size:12px;font-weight:normal;">3.18</div>
<div class="t" style="left:895px;top:280px;width:37px;height:25px;line-height:25px;color:#cc1111;font-size:12px;font-weight:normal;">胜</div>
<div class="t" style="left:933px;top:280px;width:37px;height:25px;line-height:25px;color:#cc1111;font-size:12px;font-weight:normal;">赢</div>
<div class="t" style="left:971px;top:280px;width:57px;height:25px;line-height:25px;color:#cc1111;font-size:12px;font-weight:normal;">大</div>
<div style="position:absolute;left:1px;top:305px;width:1028px;height:25px;background:#fff;"></div>
<div style="position:absolute;left:511px;top:305px;width:47px;height:25px;background:#fefaf6;"></div>
<div style="position:absolute;left:559px;top:305px;width:83px;height:25px;background:#fefaf6;"></div>
<div style="position:absolute;left:643px;top:305px;width:51px;height:25px;background:#fefaf6;"></div>
<div style="position:absolute;left:695px;top:305px;width:65px;height:25px;background:#f0f7fb;"></div>
<div style="position:absolute;left:761px;top:305px;width:65px;height:25px;background:#f0f7fb;"></div>
<div style="position:absolute;left:827px;top:305px;width:67px;height:25px;background:#f0f7fb;"></div>
<div style="position:absolute;left:2px;top:305px;width:80px;height:25px;background:#33c799;"></div>
<div style="position:absolute;left:1px;top:330px;width:1028px;height:1px;background:#c0c3c8;"></div>
<div style="position:absolute;left:2px;top:330px;width:80px;height:1px;background:#a6dcc6;"></div>
<div style="position:absolute;left:1px;top:304px;width:1px;height:27px;background:#c0c3c8;"></div>
<div style="position:absolute;left:82px;top:304px;width:1px;height:27px;background:#c0c3c8;"></div>
<div style="position:absolute;left:158px;top:304px;width:1px;height:27px;background:#c0c3c8;"></div>
<div style="position:absolute;left:269px;top:304px;width:1px;height:27px;background:#c0c3c8;"></div>
<div style="position:absolute;left:359px;top:304px;width:1px;height:27px;background:#c0c3c8;"></div>
<div style="position:absolute;left:398px;top:304px;width:1px;height:27px;background:#c0c3c8;"></div>
<div style="position:absolute;left:510px;top:304px;width:1px;height:27px;background:#c0c3c8;"></div>
<div style="position:absolute;left:558px;top:304px;width:1px;height:27px;background:#c0c3c8;"></div>
<div style="position:absolute;left:642px;top:304px;width:1px;height:27px;background:#c0c3c8;"></div>
<div style="position:absolute;left:694px;top:304px;width:1px;height:27px;background:#c0c3c8;"></div>
<div style="position:absolute;left:760px;top:304px;width:1px;height:27px;background:#c0c3c8;"></div>
<div style="position:absolute;left:826px;top:304px;width:1px;height:27px;background:#c0c3c8;"></div>
<div style="position:absolute;left:894px;top:304px;width:1px;height:27px;background:#c0c3c8;"></div>
<div style="position:absolute;left:932px;top:304px;width:1px;height:27px;background:#c0c3c8;"></div>
<div style="position:absolute;left:970px;top:304px;width:1px;height:27px;background:#c0c3c8;"></div>
<div style="position:absolute;left:82px;top:305px;width:1px;height:25px;background:#7ac5b0;"></div>
<div class="t" style="left:2px;top:306px;width:80px;height:25px;line-height:25px;color:#fff;font-size:12px;font-weight:normal;">日职乙</div>
<div class="t" style="left:83px;top:306px;width:75px;height:25px;line-height:25px;color:#333;font-size:12px;font-weight:normal;">25-05-11</div>
<div class="t" style="left:159px;top:306px;width:110px;height:25px;line-height:25px;color:#137013;font-size:12px;font-weight:normal;">水户蜀葵</div>
<div class="t" style="left:270px;top:306px;width:89px;height:25px;line-height:25px;color:#333;font-size:12px;font-weight:normal;"><span style="color:#cc1111">2-1</span>(1-0)</div>
<div class="t" style="left:360px;top:306px;width:38px;height:25px;line-height:25px;color:#333;font-size:12px;font-weight:normal;">10-3</div>
<div class="t" style="left:399px;top:306px;width:111px;height:25px;line-height:25px;color:#333;font-size:12px;font-weight:normal;">秋田蓝色闪电</div>
<div class="t" style="left:511px;top:306px;width:47px;height:25px;line-height:25px;color:#333;font-size:12px;font-weight:normal;">0.96</div>
<div class="t" style="left:559px;top:306px;width:83px;height:25px;line-height:25px;color:#333;font-size:12px;font-weight:normal;">平/半</div>
<div class="t" style="left:643px;top:306px;width:51px;height:25px;line-height:25px;color:#333;font-size:12px;font-weight:normal;">0.93</div>
<div class="t" style="left:695px;top:306px;width:65px;height:25px;line-height:25px;color:#333;font-size:12px;font-weight:normal;">2.14</div>
<div class="t" style="left:761px;top:306px;width:65px;height:25px;line-height:25px;color:#333;font-size:12px;font-weight:normal;">3.07</div>
<div class="t" style="left:827px;top:306px;width:67px;height:25px;line-height:25px;color:#333;font-size:12px;font-weight:normal;">3.39</div>
<div class="t" style="left:895px;top:306px;width:37px;height:25px;line-height:25px;color:#cc1111;font-size:12px;font-weight:normal;">胜</div>
<div class="t" style="left:933px;top:306px;width:37px;height:25px;line-height:25px;color:#cc1111;font-size:12px;font-weight:normal;">赢</div>
<div class="t" style="left:971px;top:306px;width:57px;height:25px;line-height:25px;color:#cc1111;font-size:12px;font-weight:normal;">大</div>
<div style="position:absolute;left:1px;top:331px;width:1028px;height:25px;background:#f0f0f0;"></div>
<div style="position:absolute;left:511px;top:331px;width:47px;height:25px;background:#fefaf6;"></div>
<div style="position:absolute;left:559px;top:331px;width:83px;height:25px;background:#fefaf6;"></div>
<div style="position:absolute;left:643px;top:331px;width:51px;height:25px;background:#fefaf6;"></div>
<div style="position:absolute;left:695px;top:331px;width:65px;height:25px;background:#f0f7fb;"></div>
<div style="position:absolute;left:761px;top:331px;width:65px;height:25px;background:#f0f7fb;"></div>
<div style="position:absolute;left:827px;top:331px;width:67px;height:25px;background:#f0f7fb;"></div>
<div style="position:absolute;left:2px;top:331px;width:80px;height:25px;background:#33c799;"></div>
<div style="position:absolute;left:1px;top:356px;width:1028px;height:1px;background:#c0c3c8;"></div>
<div style="position:absolute;left:2px;top:356px;width:80px;height:1px;background:#a6dcc6;"></div>
<div style="position:absolute;left:1px;top:330px;width:1px;height:27px;background:#c0c3c8;"></div>
<div style="position:absolute;left:82px;top:330px;width:1px;height:27px;background:#c0c3c8;"></div>
<div style="position:absolute;left:158px;top:330px;width:1px;height:27px;background:#c0c3c8;"></div>
<div style="position:absolute;left:269px;top:330px;width:1px;height:27px;background:#c0c3c8;"></div>
<div style="position:absolute;left:359px;top:330px;width:1px;height:27px;background:#c0c3c8;"></div>
<div style="position:absolute;left:398px;top:330px;width:1px;height:27px;background:#c0c3c8;"></div>
<div style="position:absolute;left:510px;top:330px;width:1px;height:27px;background:#c0c3c8;"></div>
<div style="position:absolute;left:558px;top:330px;width:1px;height:27px;background:#c0c3c8;"></div>
<div style="position:absolute;left:642px;top:330px;width:1px;height:27px;background:#c0c3c8;"></div>
<div style="position:absolute;left:694px;top:330px;width:1px;height:27px;background:#c0c3c8;"></div>
<div style="position:absolute;left:760px;top:330px;width:1px;height:27px;background:#c0c3c8;"></div>
<div style="position:absolute;left:826px;top:330px;width:1px;height:27px;background:#c0c3c8;"></div>
<div style="position:absolute;left:894px;top:330px;width:1px;height:27px;background:#c0c3c8;"></div>
<div style="position:absolute;left:932px;top:330px;width:1px;height:27px;background:#c0c3c8;"></div>
<div style="position:absolute;left:970px;top:330px;width:1px;height:27px;background:#c0c3c8;"></div>
<div style="position:absolute;left:82px;top:331px;width:1px;height:25px;background:#7ac5b0;"></div>
<div class="t" style="left:2px;top:332px;width:80px;height:25px;line-height:25px;color:#fff;font-size:12px;font-weight:normal;">日职乙</div>
<div class="t" style="left:83px;top:332px;width:75px;height:25px;line-height:25px;color:#333;font-size:12px;font-weight:normal;">25-05-06</div>
<div class="t" style="left:159px;top:332px;width:110px;height:25px;line-height:25px;color:#333;font-size:12px;font-weight:normal;">山口雷法</div>
<div class="t" style="left:270px;top:332px;width:89px;height:25px;line-height:25px;color:#333;font-size:12px;font-weight:normal;"><span style="color:#cc1111">1-2</span>(0-2)</div>
<div class="t" style="left:360px;top:332px;width:38px;height:25px;line-height:25px;color:#333;font-size:12px;font-weight:normal;">9-0</div>
<div class="t" style="left:399px;top:332px;width:111px;height:25px;line-height:25px;color:#137013;font-size:12px;font-weight:normal;">水户蜀葵</div>
<div class="t" style="left:511px;top:332px;width:47px;height:25px;line-height:25px;color:#333;font-size:12px;font-weight:normal;">0.84</div>
<div class="t" style="left:559px;top:332px;width:83px;height:25px;line-height:25px;color:#333;font-size:12px;font-weight:normal;">平手</div>
<div class="t" style="left:643px;top:332px;width:51px;height:25px;line-height:25px;color:#333;font-size:12px;font-weight:normal;">1.05</div>
<div class="t" style="left:695px;top:332px;width:65px;height:25px;line-height:25px;color:#333;font-size:12px;font-weight:normal;">2.58</div>
<div class="t" style="left:761px;top:332px;width:65px;height:25px;line-height:25px;color:#333;font-size:12px;font-weight:normal;">2.97</div>
<div class="t" style="left:827px;top:332px;width:67px;height:25px;line-height:25px;color:#333;font-size:12px;font-weight:normal;">2.75</div>
<div class="t" style="left:895px;top:332px;width:37px;height:25px;line-height:25px;color:#cc1111;font-size:12px;font-weight:normal;">胜</div>
<div class="t" style="left:933px;top:332px;width:37px;height:25px;line-height:25px;color:#cc1111;font-size:12px;font-weight:normal;">赢</div>
<div class="t" style="left:971px;top:332px;width:57px;height:25px;line-height:25px;color:#cc1111;font-size:12px;font-weight:normal;">大</div>
<div style="position:absolute;left:1px;top:357px;width:1028px;height:25px;background:#fff;"></div>
<div style="position:absolute;left:1px;top:356px;width:1px;height:26px;background:#c0c3c8;"></div>
<div style="position:absolute;left:1px;top:382px;width:1028px;height:1px;background:#c0c3c8;"></div>
<div class="t" style="left:1px;top:358px;width:1028px;height:25px;line-height:25px;color:#333;font-size:12px;font-weight:normal;letter-spacing:0.19px;">近<span style="color:#cc1111">10</span>场,胜8平1负1, 胜率:<span style="color:#cc1111">80%</span> 让胜率:<span style="color:#cc1111">80%</span> 大率:<span style="color:#cc1111">50%</span> 单率:<span style="color:#cc1111">80%</span></div>
<div style="position:absolute;left:1px;top:383px;width:1027px;height:25px;background:#dce2eb;"></div>
<div class="t" style="left:21px;top:386.5px;width:100px;height:25px;line-height:25px;color:#222;font-size:12px;font-weight:bold;text-align:left;">富山胜利</div>
<div class="t" style="left:391px;top:386px;height:25px;line-height:25px;font-size:12px;color:#333;text-align:left;white-space:nowrap">近</div>
<div style="position:absolute;left:407px;top:389px;width:36px;height:15px;border:1px solid #767676;border-radius:1.5px;background:#fff;"><span style="position:absolute;left:5px;top:0px;line-height:15px;font-size:13px;color:#000;font-family:'Liberation Serif',serif;white-space:nowrap">10</span><svg width="11" height="8" viewBox="0 0 11 8" style="position:absolute;right:3px;top:3.5px"><path d="M1.2 1.3 L5.5 5.6 L9.8 1.3" fill="none" stroke="#000" stroke-width="2.3"/></svg></div>
<div class="t" style="left:449px;top:386px;height:25px;line-height:25px;font-size:12px;color:#333;text-align:left;white-space:nowrap">场</div>
<div style="position:absolute;left:465px;top:389px;width:11px;height:11px;background:#fff;border:1px solid #767676;border-radius:2px;"></div>
<div class="t" style="left:481px;top:386px;height:25px;line-height:25px;font-size:12px;color:#333;text-align:left;white-space:nowrap">同客</div>
<div style="position:absolute;left:510px;top:389px;width:13px;height:13px;background:#0075ff;border-radius:2px;"><svg width="13" height="13" viewBox="0 0 13 13" style="position:absolute;left:0;top:0"><path d="M2.5 6.5 L5.2 9.2 L10.5 3.6" fill="none" stroke="#fff" stroke-width="2"/></svg></div>
<div class="t" style="left:523px;top:386px;height:25px;line-height:25px;font-size:12px;color:#333;text-align:left;white-space:nowrap">日职乙</div>
<div style="position:absolute;left:559px;top:389px;width:13px;height:13px;background:#0075ff;border-radius:2px;"><svg width="13" height="13" viewBox="0 0 13 13" style="position:absolute;left:0;top:0"><path d="M2.5 6.5 L5.2 9.2 L10.5 3.6" fill="none" stroke="#fff" stroke-width="2"/></svg></div>
<div class="t" style="left:572px;top:386px;height:25px;line-height:25px;font-size:12px;color:#333;text-align:left;white-space:nowrap">日皇杯</div>
<div style="position:absolute;left:608px;top:389px;width:13px;height:13px;background:#0075ff;border-radius:2px;"><svg width="13" height="13" viewBox="0 0 13 13" style="position:absolute;left:0;top:0"><path d="M2.5 6.5 L5.2 9.2 L10.5 3.6" fill="none" stroke="#fff" stroke-width="2"/></svg></div>
<div class="t" style="left:621px;top:386px;height:25px;line-height:25px;font-size:12px;color:#333;text-align:left;white-space:nowrap">日联杯</div>
<div style="position:absolute;left:657px;top:389px;width:13px;height:13px;background:#0075ff;border-radius:2px;"><svg width="13" height="13" viewBox="0 0 13 13" style="position:absolute;left:0;top:0"><path d="M2.5 6.5 L5.2 9.2 L10.5 3.6" fill="none" stroke="#fff" stroke-width="2"/></svg></div>
<div class="t" style="left:670px;top:386px;height:25px;line-height:25px;font-size:12px;color:#333;text-align:left;white-space:nowrap">日职丙</div>
<div style="position:absolute;left:1px;top:408px;width:1028px;height:39px;background:#dce2eb;"></div>
<div style="position:absolute;left:1px;top:408px;width:1028px;height:1px;background:#c0c3c8;"></div>
<div style="position:absolute;left:501px;top:428px;width:527px;height:1px;background:#c0c3c8;"></div>
<div style="position:absolute;left:1px;top:447px;width:1028px;height:1px;background:#c0c3c8;"></div>
<div style="position:absolute;left:1px;top:408px;width:1px;height:39px;background:#c0c3c8;"></div>
<div style="position:absolute;left:82px;top:408px;width:1px;height:39px;background:#c0c3c8;"></div>
<div style="position:absolute;left:160px;top:408px;width:1px;height:39px;background:#c0c3c8;"></div>
<div style="position:absolute;left:274px;top:408px;width:1px;height:39px;background:#c0c3c8;"></div>
<div style="position:absolute;left:366px;top:408px;width:1px;height:39px;background:#c0c3c8;"></div>
<div style="position:absolute;left:406px;top:408px;width:1px;height:39px;background:#c0c3c8;"></div>
<div style="position:absolute;left:501px;top:408px;width:1px;height:39px;background:#c0c3c8;"></div>
<div style="position:absolute;left:689px;top:408px;width:1px;height:39px;background:#c0c3c8;"></div>
<div style="position:absolute;left:892px;top:408px;width:1px;height:39px;background:#c0c3c8;"></div>
<div style="position:absolute;left:550px;top:428px;width:1px;height:19px;background:#c0c3c8;"></div>
<div style="position:absolute;left:636px;top:428px;width:1px;height:19px;background:#c0c3c8;"></div>
<div style="position:absolute;left:756px;top:428px;width:1px;height:19px;background:#c0c3c8;"></div>
<div style="position:absolute;left:823px;top:428px;width:1px;height:19px;background:#c0c3c8;"></div>
<div style="position:absolute;left:931px;top:428px;width:1px;height:19px;background:#c0c3c8;"></div>
<div style="position:absolute;left:970px;top:428px;width:1px;height:19px;background:#c0c3c8;"></div>
<div class="t" style="left:2px;top:411px;width:80px;height:38px;line-height:38px;color:#333;font-size:12px;font-weight:normal;">类型</div>
<div class="t" style="left:83px;top:411px;width:77px;height:38px;line-height:38px;color:#333;font-size:12px;font-weight:normal;">日期</div>
<div class="t" style="left:161px;top:411px;width:113px;height:38px;line-height:38px;color:#333;font-size:12px;font-weight:normal;">主场</div>
<div class="t" style="left:275px;top:411px;width:91px;height:38px;line-height:38px;color:#333;font-size:12px;font-weight:normal;">比分(半场)</div>
<div class="t" style="left:367px;top:411px;width:39px;height:38px;line-height:38px;color:#333;font-size:12px;font-weight:normal;">角球</div>
<div class="t" style="left:407px;top:411px;width:94px;height:38px;line-height:38px;color:#333;font-size:12px;font-weight:normal;">客场</div>
<div class="t" style="left:502px;top:429.5px;width:48px;height:18px;line-height:18px;color:#333;font-size:12px;font-weight:normal;">主</div>
<div class="t" style="left:551px;top:429.5px;width:85px;height:18px;line-height:18px;color:#333;font-size:12px;font-weight:normal;">让球</div>
<div class="t" style="left:637px;top:429.5px;width:52px;height:18px;line-height:18px;color:#333;font-size:12px;font-weight:normal;">客</div>
<div class="t" style="left:690px;top:429.5px;width:66px;height:18px;line-height:18px;color:#333;font-size:12px;font-weight:normal;">主</div>
<div class="t" style="left:757px;top:429.5px;width:66px;height:18px;line-height:18px;color:#333;font-size:12px;font-weight:normal;">和</div>
<div class="t" style="left:824px;top:429.5px;width:68px;height:18px;line-height:18px;color:#333;font-size:12px;font-weight:normal;">客</div>
<div class="t" style="left:893px;top:429.5px;width:38px;height:18px;line-height:18px;color:#333;font-size:12px;font-weight:normal;">胜负</div>
<div class="t" style="left:932px;top:429.5px;width:38px;height:18px;line-height:18px;color:#333;font-size:12px;font-weight:normal;">让球</div>
<div class="t" style="left:971px;top:429.5px;width:57px;height:18px;line-height:18px;color:#333;font-size:12px;font-weight:normal;">进球数</div>
<div style="position:absolute;left:535px;top:409px;width:59px;height:17px;border:1px solid #767676;border-radius:1.5px;background:#fff;"><span style="position:absolute;left:5px;top:0px;line-height:17px;font-size:13px;color:#000;font-family:'Liberation Sans',sans-serif;white-space:nowrap">Crow*</span><svg width="11" height="8" viewBox="0 0 11 8" style="position:absolute;right:4px;top:5px"><path d="M1.2 1.3 L5.5 5.6 L9.8 1.3" fill="none" stroke="#000" stroke-width="2.3"/></svg></div>
<div style="position:absolute;left:604px;top:409px;width:49px;height:17px;border:1px solid #767676;border-radius:1.5px;background:#fff;"><span style="position:absolute;left:4px;top:0px;line-height:17px;font-size:13px;color:#000;font-family:'Liberation Sans',sans-serif;white-space:nowrap">终指</span><svg width="11" height="8" viewBox="0 0 11 8" style="position:absolute;right:4px;top:5px"><path d="M1.2 1.3 L5.5 5.6 L9.8 1.3" fill="none" stroke="#000" stroke-width="2.3"/></svg></div>
<div style="position:absolute;left:726px;top:409px;width:68px;height:17px;border:1px solid #767676;border-radius:1.5px;background:#fff;"><span style="position:absolute;left:4px;top:0px;line-height:17px;font-size:13px;color:#000;font-family:'Liberation Sans',sans-serif;white-space:nowrap">平均值</span><svg width="11" height="8" viewBox="0 0 11 8" style="position:absolute;right:4px;top:5px"><path d="M1.2 1.3 L5.5 5.6 L9.8 1.3" fill="none" stroke="#000" stroke-width="2.3"/></svg></div>
<div style="position:absolute;left:804px;top:409px;width:49px;height:17px;border:1px solid #767676;border-radius:1.5px;background:#fff;"><span style="position:absolute;left:4px;top:0px;line-height:17px;font-size:13px;color:#000;font-family:'Liberation Sans',sans-serif;white-space:nowrap">终指</span><svg width="11" height="8" viewBox="0 0 11 8" style="position:absolute;right:4px;top:5px"><path d="M1.2 1.3 L5.5 5.6 L9.8 1.3" fill="none" stroke="#000" stroke-width="2.3"/></svg></div>
<div style="position:absolute;left:935px;top:409px;width:49px;height:17px;border:1px solid #767676;border-radius:1.5px;background:#fff;"><span style="position:absolute;left:4px;top:0px;line-height:17px;font-size:13px;color:#000;font-family:'Liberation Sans',sans-serif;white-space:nowrap">全场</span><svg width="11" height="8" viewBox="0 0 11 8" style="position:absolute;right:4px;top:5px"><path d="M1.2 1.3 L5.5 5.6 L9.8 1.3" fill="none" stroke="#000" stroke-width="2.3"/></svg></div>
<div style="position:absolute;left:1px;top:448px;width:1028px;height:25px;background:#fff;"></div>
<div style="position:absolute;left:502px;top:448px;width:48px;height:25px;background:#fefaf6;"></div>
<div style="position:absolute;left:551px;top:448px;width:85px;height:25px;background:#fefaf6;"></div>
<div style="position:absolute;left:637px;top:448px;width:52px;height:25px;background:#fefaf6;"></div>
<div style="position:absolute;left:690px;top:448px;width:66px;height:25px;background:#f0f7fb;"></div>
<div style="position:absolute;left:757px;top:448px;width:66px;height:25px;background:#f0f7fb;"></div>
<div style="position:absolute;left:824px;top:448px;width:68px;height:25px;background:#f0f7fb;"></div>
<div style="position:absolute;left:2px;top:448px;width:80px;height:25px;background:#33c799;"></div>
<div style="position:absolute;left:1px;top:473px;width:1028px;height:1px;background:#c0c3c8;"></div>
<div style="position:absolute;left:2px;top:473px;width:80px;height:1px;background:#a6dcc6;"></div>
<div style="position:absolute;left:1px;top:447px;width:1px;height:27px;background:#c0c3c8;"></div>
<div style="position:absolute;left:82px;top:447px;width:1px;height:27px;background:#c0c3c8;"></div>
<div style="position:absolute;left:160px;top:447px;width:1px;height:27px;background:#c0c3c8;"></div>
<div style="position:absolute;left:274px;top:447px;width:1px;height:27px;background:#c0c3c8;"></div>
<div style="position:absolute;left:366px;top:447px;width:1px;height:27px;background:#c0c3c8;"></div>
<div style="position:absolute;left:406px;top:447px;width:1px;height:27px;background:#c0c3c8;"></div>
<div style="position:absolute;left:501px;top:447px;width:1px;height:27px;background:#c0c3c8;"></div>
<div style="position:absolute;left:550px;top:447px;width:1px;height:27px;background:#c0c3c8;"></div>
<div style="position:absolute;left:636px;top:447px;width:1px;height:27px;background:#c0c3c8;"></div>
<div style="position:absolute;left:689px;top:447px;width:1px;height:27px;background:#c0c3c8;"></div>
<div style="position:absolute;left:756px;top:447px;width:1px;height:27px;background:#c0c3c8;"></div>
<div style="position:absolute;left:823px;top:447px;width:1px;height:27px;background:#c0c3c8;"></div>
<div style="position:absolute;left:892px;top:447px;width:1px;height:27px;background:#c0c3c8;"></div>
<div style="position:absolute;left:931px;top:447px;width:1px;height:27px;background:#c0c3c8;"></div>
<div style="position:absolute;left:970px;top:447px;width:1px;height:27px;background:#c0c3c8;"></div>
<div style="position:absolute;left:82px;top:448px;width:1px;height:25px;background:#7ac5b0;"></div>
<div style="position:absolute;left:2px;top:447px;width:80px;height:1px;background:#a6dcc6;"></div>
<div class="t" style="left:2px;top:449px;width:80px;height:25px;line-height:25px;color:#fff;font-size:12px;font-weight:normal;">日职乙</div>
<div class="t" style="left:83px;top:449px;width:77px;height:25px;line-height:25px;color:#333;font-size:12px;font-weight:normal;">25-07-05</div>
<div class="t" style="left:161px;top:449px;width:113px;height:25px;line-height:25px;color:#333;font-size:12px;font-weight:normal;">仙台维加泰</div>
<div class="t" style="left:275px;top:449px;width:91px;height:25px;line-height:25px;color:#333;font-size:12px;font-weight:normal;"><span style="color:#cc1111">0-1</span>(0-1)</div>
<div class="t" style="left:367px;top:449px;width:39px;height:25px;line-height:25px;color:#333;font-size:12px;font-weight:normal;">13-4</div>
<div class="t" style="left:407px;top:449px;width:94px;height:25px;line-height:25px;color:#137013;font-size:12px;font-weight:normal;">富山胜利</div>
<div class="t" style="left:502px;top:449px;width:48px;height:25px;line-height:25px;color:#333;font-size:12px;font-weight:normal;">0.86</div>
<div class="t" style="left:551px;top:449px;width:85px;height:25px;line-height:25px;color:#333;font-size:12px;font-weight:normal;">半/一</div>
<div class="t" style="left:637px;top:449px;width:52px;height:25px;line-height:25px;color:#333;font-size:12px;font-weight:normal;">1.03</div>
<div class="t" style="left:690px;top:449px;width:66px;height:25px;line-height:25px;color:#333;font-size:12px;font-weight:normal;">1.64</div>
<div class="t" style="left:757px;top:449px;width:66px;height:25px;line-height:25px;color:#333;font-size:12px;font-weight:normal;">3.63</div>
<div class="t" style="left:824px;top:449px;width:68px;height:25px;line-height:25px;color:#333;font-size:12px;font-weight:normal;">4.92</div>
<div class="t" style="left:893px;top:449px;width:38px;height:25px;line-height:25px;color:#cc1111;font-size:12px;font-weight:normal;">胜</div>
<div class="t" style="left:932px;top:449px;width:38px;height:25px;line-height:25px;color:#cc1111;font-size:12px;font-weight:normal;">赢</div>
<div class="t" style="left:971px;top:449px;width:57px;height:25px;line-height:25px;color:#2a2aaa;font-size:12px;font-weight:normal;">小</div>
<div style="position:absolute;left:1px;top:474px;width:1028px;height:25px;background:#f0f0f0;"></div>
<div style="position:absolute;left:502px;top:474px;width:48px;height:25px;background:#fefaf6;"></div>
<div style="position:absolute;left:551px;top:474px;width:85px;height:25px;background:#fefaf6;"></div>
<div style="position:absolute;left:637px;top:474px;width:52px;height:25px;background:#fefaf6;"></div>
<div style="position:absolute;left:690px;top:474px;width:66px;height:25px;background:#f0f7fb;"></div>
<div style="position:absolute;left:757px;top:474px;width:66px;height:25px;background:#f0f7fb;"></div>
<div style="position:absolute;left:824px;top:474px;width:68px;height:25px;background:#f0f7fb;"></div>
<div style="position:absolute;left:2px;top:474px;width:80px;height:25px;background:#33c799;"></div>
<div style="position:absolute;left:1px;top:499px;width:1028px;height:1px;background:#c0c3c8;"></div>
<div style="position:absolute;left:2px;top:499px;width:80px;height:1px;background:#a6dcc6;"></div>
<div style="position:absolute;left:1px;top:473px;width:1px;height:27px;background:#c0c3c8;"></div>
<div style="position:absolute;left:82px;top:473px;width:1px;height:27px;background:#c0c3c8;"></div>
<div style="position:absolute;left:160px;top:473px;width:1px;height:27px;background:#c0c3c8;"></div>
<div style="position:absolute;left:274px;top:473px;width:1px;height:27px;background:#c0c3c8;"></div>
<div style="position:absolute;left:366px;top:473px;width:1px;height:27px;background:#c0c3c8;"></div>
<div style="position:absolute;left:406px;top:473px;width:1px;height:27px;background:#c0c3c8;"></div>
<div style="position:absolute;left:501px;top:473px;width:1px;height:27px;background:#c0c3c8;"></div>
<div style="position:absolute;left:550px;top:473px;width:1px;height:27px;background:#c0c3c8;"></div>
<div style="position:absolute;left:636px;top:473px;width:1px;height:27px;background:#c0c3c8;"></div>
<div style="position:absolute;left:689px;top:473px;width:1px;height:27px;background:#c0c3c8;"></div>
<div style="position:absolute;left:756px;top:473px;width:1px;height:27px;background:#c0c3c8;"></div>
<div style="position:absolute;left:823px;top:473px;width:1px;height:27px;background:#c0c3c8;"></div>
<div style="position:absolute;left:892px;top:473px;width:1px;height:27px;background:#c0c3c8;"></div>
<div style="position:absolute;left:931px;top:473px;width:1px;height:27px;background:#c0c3c8;"></div>
<div style="position:absolute;left:970px;top:473px;width:1px;height:27px;background:#c0c3c8;"></div>
<div style="position:absolute;left:82px;top:474px;width:1px;height:25px;background:#7ac5b0;"></div>
<div class="t" style="left:2px;top:475px;width:80px;height:25px;line-height:25px;color:#fff;font-size:12px;font-weight:normal;">日职乙</div>
<div class="t" style="left:83px;top:475px;width:77px;height:25px;line-height:25px;color:#333;font-size:12px;font-weight:normal;">25-06-28</div>
<div class="t" style="left:161px;top:475px;width:113px;height:25px;line-height:25px;color:#137013;font-size:12px;font-weight:normal;">富山胜利</div>
<div class="t" style="left:275px;top:475px;width:91px;height:25px;line-height:25px;color:#333;font-size:12px;font-weight:normal;"><span style="color:#cc1111">1-0</span>(0-0)</div>
<div class="t" style="left:367px;top:475px;width:39px;height:25px;line-height:25px;color:#333;font-size:12px;font-weight:normal;">7-3</div>
<div class="t" style="left:407px;top:475px;width:94px;height:25px;line-height:25px;color:#333;font-size:12px;font-weight:normal;">千叶市原</div>
<div class="t" style="left:502px;top:475px;width:48px;height:25px;line-height:25px;color:#333;font-size:12px;font-weight:normal;">1.01</div>
<div class="t" style="left:551px;top:475px;width:85px;height:25px;line-height:25px;color:#333;font-size:12px;font-weight:normal;">受半球</div>
<div class="t" style="left:637px;top:475px;width:52px;height:25px;line-height:25px;color:#333;font-size:12px;font-weight:normal;">0.88</div>
<div class="t" style="left:690px;top:475px;width:66px;height:25px;line-height:25px;color:#333;font-size:12px;font-weight:normal;">3.85</div>
<div class="t" style="left:757px;top:475px;width:66px;height:25px;line-height:25px;color:#333;font-size:12px;font-weight:normal;">3.44</div>
<div class="t" style="left:824px;top:475px;width:68px;height:25px;line-height:25px;color:#333;font-size:12px;font-weight:normal;">1.86</div>
<div class="t" style="left:893px;top:475px;width:38px;height:25px;line-height:25px;color:#cc1111;font-size:12px;font-weight:normal;">胜</div>
<div class="t" style="left:932px;top:475px;width:38px;height:25px;line-height:25px;color:#cc1111;font-size:12px;font-weight:normal;">赢</div>
<div class="t" style="left:971px;top:475px;width:57px;height:25px;line-height:25px;color:#2a2aaa;font-size:12px;font-weight:normal;">小</div>
<div style="position:absolute;left:1px;top:500px;width:1028px;height:25px;background:#fff;"></div>
<div style="position:absolute;left:502px;top:500px;width:48px;height:25px;background:#fefaf6;"></div>
<div style="position:absolute;left:551px;top:500px;width:85px;height:25px;background:#fefaf6;"></div>
<div style="position:absolute;left:637px;top:500px;width:52px;height:25px;background:#fefaf6;"></div>
<div style="position:absolute;left:690px;top:500px;width:66px;height:25px;background:#f0f7fb;"></div>
<div style="position:absolute;left:757px;top:500px;width:66px;height:25px;background:#f0f7fb;"></div>
<div style="position:absolute;left:824px;top:500px;width:68px;height:25px;background:#f0f7fb;"></div>
<div style="position:absolute;left:2px;top:500px;width:80px;height:25px;background:#33c799;"></div>
<div style="position:absolute;left:1px;top:525px;width:1028px;height:1px;background:#c0c3c8;"></div>
<div style="position:absolute;left:2px;top:525px;width:80px;height:1px;background:#a6dcc6;"></div>
<div style="position:absolute;left:1px;top:499px;width:1px;height:27px;background:#c0c3c8;"></div>
<div style="position:absolute;left:82px;top:499px;width:1px;height:27px;background:#c0c3c8;"></div>
<div style="position:absolute;left:160px;top:499px;width:1px;height:27px;background:#c0c3c8;"></div>
<div style="position:absolute;left:274px;top:499px;width:1px;height:27px;background:#c0c3c8;"></div>
<div style="position:absolute;left:366px;top:499px;width:1px;height:27px;background:#c0c3c8;"></div>
<div style="position:absolute;left:406px;top:499px;width:1px;height:27px;background:#c0c3c8;"></div>
<div style="position:absolute;left:501px;top:499px;width:1px;height:27px;background:#c0c3c8;"></div>
<div style="position:absolute;left:550px;top:499px;width:1px;height:27px;background:#c0c3c8;"></div>
<div style="position:absolute;left:636px;top:499px;width:1px;height:27px;background:#c0c3c8;"></div>
<div style="position:absolute;left:689px;top:499px;width:1px;height:27px;background:#c0c3c8;"></div>
<div style="position:absolute;left:756px;top:499px;width:1px;height:27px;background:#c0c3c8;"></div>
<div style="position:absolute;left:823px;top:499px;width:1px;height:27px;background:#c0c3c8;"></div>
<div style="position:absolute;left:892px;top:499px;width:1px;height:27px;background:#c0c3c8;"></div>
<div style="position:absolute;left:931px;top:499px;width:1px;height:27px;background:#c0c3c8;"></div>
<div style="position:absolute;left:970px;top:499px;width:1px;height:27px;background:#c0c3c8;"></div>
<div style="position:absolute;left:82px;top:500px;width:1px;height:25px;background:#7ac5b0;"></div>
<div class="t" style="left:2px;top:501px;width:80px;height:25px;line-height:25px;color:#fff;font-size:12px;font-weight:normal;">日职乙</div>
<div class="t" style="left:83px;top:501px;width:77px;height:25px;line-height:25px;color:#333;font-size:12px;font-weight:normal;">25-06-21</div>
<div class="t" style="left:161px;top:501px;width:113px;height:25px;line-height:25px;color:#333;font-size:12px;font-weight:normal;">磐城FC</div>
<div class="t" style="left:275px;top:501px;width:91px;height:25px;line-height:25px;color:#333;font-size:12px;font-weight:normal;"><span style="color:#cc1111">3-1</span>(1-0)</div>
<div class="t" style="left:367px;top:501px;width:39px;height:25px;line-height:25px;color:#333;font-size:12px;font-weight:normal;">9-4</div>
<div class="t" style="left:407px;top:501px;width:94px;height:25px;line-height:25px;color:#137013;font-size:12px;font-weight:normal;">富山胜利</div>
<div class="t" style="left:502px;top:501px;width:48px;height:25px;line-height:25px;color:#333;font-size:12px;font-weight:normal;">0.80</div>
<div class="t" style="left:551px;top:501px;width:85px;height:25px;line-height:25px;color:#333;font-size:12px;font-weight:normal;">平/半</div>
<div class="t" style="left:637px;top:501px;width:52px;height:25px;line-height:25px;color:#333;font-size:12px;font-weight:normal;">1.09</div>
<div class="t" style="left:690px;top:501px;width:66px;height:25px;line-height:25px;color:#333;font-size:12px;font-weight:normal;">2.02</div>
<div class="t" style="left:757px;top:501px;width:66px;height:25px;line-height:25px;color:#333;font-size:12px;font-weight:normal;">3.28</div>
<div class="t" style="left:824px;top:501px;width:68px;height:25px;line-height:25px;color:#333;font-size:12px;font-weight:normal;">3.46</div>
<div class="t" style="left:893px;top:501px;width:38px;height:25px;line-height:25px;color:#2a2aaa;font-size:12px;font-weight:normal;">负</div>
<div class="t" style="left:932px;top:501px;width:38px;height:25px;line-height:25px;color:#2a2aaa;font-size:12px;font-weight:normal;">输</div>
<div class="t" style="left:971px;top:501px;width:57px;height:25px;line-height:25px;color:#cc1111;font-size:12px;font-weight:normal;">大</div>
<div style="position:absolute;left:1px;top:526px;width:1028px;height:25px;background:#f0f0f0;"></div>
<div style="position:absolute;left:502px;top:526px;width:48px;height:25px;background:#fefaf6;"></div>
<div style="position:absolute;left:551px;top:526px;width:85px;height:25px;background:#fefaf6;"></div>
<div style="position:absolute;left:637px;top:526px;width:52px;height:25px;background:#fefaf6;"></div>
<div style="position:absolute;left:690px;top:526px;width:66px;height:25px;background:#f0f7fb;"></div>
<div style="position:absolute;left:757px;top:526px;width:66px;height:25px;background:#f0f7fb;"></div>
<div style="position:absolute;left:824px;top:526px;width:68px;height:25px;background:#f0f7fb;"></div>
<div style="position:absolute;left:2px;top:526px;width:80px;height:25px;background:#33c799;"></div>
<div style="position:absolute;left:1px;top:551px;width:1028px;height:1px;background:#c0c3c8;"></div>
<div style="position:absolute;left:2px;top:551px;width:80px;height:1px;background:#a6dcc6;"></div>
<div style="position:absolute;left:1px;top:525px;width:1px;height:27px;background:#c0c3c8;"></div>
<div style="position:absolute;left:82px;top:525px;width:1px;height:27px;background:#c0c3c8;"></div>
<div style="position:absolute;left:160px;top:525px;width:1px;height:27px;background:#c0c3c8;"></div>
<div style="position:absolute;left:274px;top:525px;width:1px;height:27px;background:#c0c3c8;"></div>
<div style="position:absolute;left:366px;top:525px;width:1px;height:27px;background:#c0c3c8;"></div>
<div style="position:absolute;left:406px;top:525px;width:1px;height:27px;background:#c0c3c8;"></div>
<div style="position:absolute;left:501px;top:525px;width:1px;height:27px;background:#c0c3c8;"></div>
<div style="position:absolute;left:550px;top:525px;width:1px;height:27px;background:#c0c3c8;"></div>
<div style="position:absolute;left:636px;top:525px;width:1px;height:27px;background:#c0c3c8;"></div>
<div style="position:absolute;left:689px;top:525px;width:1px;height:27px;background:#c0c3c8;"></div>
<div style="position:absolute;left:756px;top:525px;width:1px;height:27px;background:#c0c3c8;"></div>
<div style="position:absolute;left:823px;top:525px;width:1px;height:27px;background:#c0c3c8;"></div>
<div style="position:absolute;left:892px;top:525px;width:1px;height:27px;background:#c0c3c8;"></div>
<div style="position:absolute;left:931px;top:525px;width:1px;height:27px;background:#c0c3c8;"></div>
<div style="position:absolute;left:970px;top:525px;width:1px;height:27px;background:#c0c3c8;"></div>
<div style="position:absolute;left:82px;top:526px;width:1px;height:25px;background:#7ac5b0;"></div>
<div class="t" style="left:2px;top:527px;width:80px;height:25px;line-height:25px;color:#fff;font-size:12px;font-weight:normal;">日职乙</div>
<div class="t" style="left:83px;top:527px;width:77px;height:25px;line-height:25px;color:#333;font-size:12px;font-weight:normal;">25-06-15</div>
<div class="t" style="left:161px;top:527px;width:113px;height:25px;line-height:25px;color:#137013;font-size:12px;font-weight:normal;">富山胜利</div>
<div class="t" style="left:275px;top:527px;width:91px;height:25px;line-height:25px;color:#333;font-size:12px;font-weight:normal;"><span style="color:#cc1111">0-1</span>(0-0)</div>
<div class="t" style="left:367px;top:527px;width:39px;height:25px;line-height:25px;color:#333;font-size:12px;font-weight:normal;">6-9</div>
<div class="t" style="left:407px;top:527px;width:94px;height:25px;line-height:25px;color:#333;font-size:12px;font-weight:normal;">藤枝MYFC</div>
<div class="t" style="left:502px;top:527px;width:48px;height:25px;line-height:25px;color:#333;font-size:12px;font-weight:normal;">0.92</div>
<div class="t" style="left:551px;top:527px;width:85px;height:25px;line-height:25px;color:#333;font-size:12px;font-weight:normal;">平手</div>
<div class="t" style="left:637px;top:527px;width:52px;height:25px;line-height:25px;color:#333;font-size:12px;font-weight:normal;">0.97</div>
<div class="t" style="left:690px;top:527px;width:66px;height:25px;line-height:25px;color:#333;font-size:12px;font-weight:normal;">2.47</div>
<div class="t" style="left:757px;top:527px;width:66px;height:25px;line-height:25px;color:#333;font-size:12px;font-weight:normal;">3.20</div>
<div class="t" style="left:824px;top:527px;width:68px;height:25px;line-height:25px;color:#333;font-size:12px;font-weight:normal;">2.68</div>
<div class="t" style="left:893px;top:527px;width:38px;height:25px;line-height:25px;color:#2a2aaa;font-size:12px;font-weight:normal;">负</div>
<div class="t" style="left:932px;top:527px;width:38px;height:25px;line-height:25px;color:#2a2aaa;font-size:12px;font-weight:normal;">输</div>
<div class="t" style="left:971px;top:527px;width:57px;height:25px;line-height:25px;color:#2a2aaa;font-size:12px;font-weight:normal;">小</div>
<div style="position:absolute;left:1px;top:552px;width:1028px;height:25px;background:#fff;"></div>
<div style="position:absolute;left:502px;top:552px;width:48px;height:25px;background:#fefaf6;"></div>
<div style="position:absolute;left:551px;top:552px;width:85px;height:25px;background:#fefaf6;"></div>
<div style="position:absolute;left:637px;top:552px;width:52px;height:25px;background:#fefaf6;"></div>
<div style="position:absolute;left:690px;top:552px;width:66px;height:25px;background:#f0f7fb;"></div>
<div style="position:absolute;left:757px;top:552px;width:66px;height:25px;background:#f0f7fb;"></div>
<div style="position:absolute;left:824px;top:552px;width:68px;height:25px;background:#f0f7fb;"></div>
<div style="position:absolute;left:2px;top:552px;width:80px;height:25px;background:#003300;"></div>
<div style="position:absolute;left:1px;top:577px;width:1028px;height:1px;background:#c0c3c8;"></div>
<div style="position:absolute;left:2px;top:577px;width:80px;height:1px;background:#a6dcc6;"></div>
<div style="position:absolute;left:1px;top:551px;width:1px;height:27px;background:#c0c3c8;"></div>
<div style="position:absolute;left:82px;top:551px;width:1px;height:27px;background:#c0c3c8;"></div>
<div style="position:absolute;left:160px;top:551px;width:1px;height:27px;background:#c0c3c8;"></div>
<div style="position:absolute;left:274px;top:551px;width:1px;height:27px;background:#c0c3c8;"></div>
<div style="position:absolute;left:366px;top:551px;width:1px;height:27px;background:#c0c3c8;"></div>
<div style="position:absolute;left:406px;top:551px;width:1px;height:27px;background:#c0c3c8;"></div>
<div style="position:absolute;left:501px;top:551px;width:1px;height:27px;background:#c0c3c8;"></div>
<div style="position:absolute;left:550px;top:551px;width:1px;height:27px;background:#c0c3c8;"></div>
<div style="position:absolute;left:636px;top:551px;width:1px;height:27px;background:#c0c3c8;"></div>
<div style="position:absolute;left:689px;top:551px;width:1px;height:27px;background:#c0c3c8;"></div>
<div style="position:absolute;left:756px;top:551px;width:1px;height:27px;background:#c0c3c8;"></div>
<div style="position:absolute;left:823px;top:551px;width:1px;height:27px;background:#c0c3c8;"></div>
<div style="position:absolute;left:892px;top:551px;width:1px;height:27px;background:#c0c3c8;"></div>
<div style="position:absolute;left:931px;top:551px;width:1px;height:27px;background:#c0c3c8;"></div>
<div style="position:absolute;left:970px;top:551px;width:1px;height:27px;background:#c0c3c8;"></div>
<div style="position:absolute;left:82px;top:552px;width:1px;height:25px;background:#607b64;"></div>
<div class="t" style="left:2px;top:553px;width:80px;height:25px;line-height:25px;color:#fff;font-size:12px;font-weight:normal;">日皇杯</div>
<div class="t" style="left:83px;top:553px;width:77px;height:25px;line-height:25px;color:#333;font-size:12px;font-weight:normal;">25-06-11</div>
<div class="t" style="left:161px;top:553px;width:113px;height:25px;line-height:25px;color:#333;font-size:12px;font-weight:normal;">仙台维加泰</div>
<div class="t" style="left:275px;top:553px;width:91px;height:25px;line-height:25px;color:#333;font-size:12px;font-weight:normal;"><span style="color:#cc1111">0-1</span>(0-1)</div>
<div class="t" style="left:367px;top:553px;width:39px;height:25px;line-height:25px;color:#333;font-size:12px;font-weight:normal;">7-1</div>
<div class="t" style="left:407px;top:553px;width:94px;height:25px;line-height:25px;color:#137013;font-size:12px;font-weight:normal;">富山胜利</div>
<div class="t" style="left:502px;top:553px;width:48px;height:25px;line-height:25px;color:#333;font-size:12px;font-weight:normal;">1.02</div>
<div class="t" style="left:551px;top:553px;width:85px;height:25px;line-height:25px;color:#333;font-size:12px;font-weight:normal;">半球</div>
<div class="t" style="left:637px;top:553px;width:52px;height:25px;line-height:25px;color:#333;font-size:12px;font-weight:normal;">0.84</div>
<div class="t" style="left:690px;top:553px;width:66px;height:25px;line-height:25px;color:#333;font-size:12px;font-weight:normal;">1.93</div>
<div class="t" style="left:757px;top:553px;width:66px;height:25px;line-height:25px;color:#333;font-size:12px;font-weight:normal;">3.26</div>
<div class="t" style="left:824px;top:553px;width:68px;height:25px;line-height:25px;color:#333;font-size:12px;font-weight:normal;">3.71</div>
<div class="t" style="left:893px;top:553px;width:38px;height:25px;line-height:25px;color:#cc1111;font-size:12px;font-weight:normal;">胜</div>
<div class="t" style="left:932px;top:553px;width:38px;height:25px;line-height:25px;color:#cc1111;font-size:12px;font-weight:normal;">赢</div>
<div class="t" style="left:971px;top:553px;width:57px;height:25px;line-height:25px;color:#2a2aaa;font-size:12px;font-weight:normal;">小</div>
<div style="position:absolute;left:1px;top:578px;width:1028px;height:25px;background:#f0f0f0;"></div>
<div style="position:absolute;left:502px;top:578px;width:48px;height:25px;background:#fefaf6;"></div>
<div style="position:absolute;left:551px;top:578px;width:85px;height:25px;background:#fefaf6;"></div>
<div style="position:absolute;left:637px;top:578px;width:52px;height:25px;background:#fefaf6;"></div>
<div style="position:absolute;left:690px;top:578px;width:66px;height:25px;background:#f0f7fb;"></div>
<div style="position:absolute;left:757px;top:578px;width:66px;height:25px;background:#f0f7fb;"></div>
<div style="position:absolute;left:824px;top:578px;width:68px;height:25px;background:#f0f7fb;"></div>
<div style="position:absolute;left:2px;top:578px;width:80px;height:25px;background:#33c799;"></div>
<div style="position:absolute;left:1px;top:603px;width:1028px;height:1px;background:#c0c3c8;"></div>
<div style="position:absolute;left:2px;top:603px;width:80px;height:1px;background:#a6dcc6;"></div>
<div style="position:absolute;left:1px;top:577px;width:1px;height:27px;background:#c0c3c8;"></div>
<div style="position:absolute;left:82px;top:577px;width:1px;height:27px;background:#c0c3c8;"></div>
<div style="position:absolute;left:160px;top:577px;width:1px;height:27px;background:#c0c3c8;"></div>
<div style="position:absolute;left:274px;top:577px;width:1px;height:27px;background:#c0c3c8;"></div>
<div style="position:absolute;left:366px;top:577px;width:1px;height:27px;background:#c0c3c8;"></div>
<div style="position:absolute;left:406px;top:577px;width:1px;height:27px;background:#c0c3c8;"></div>
<div style="position:absolute;left:501px;top:577px;width:1px;height:27px;background:#c0c3c8;"></div>
<div style="position:absolute;left:550px;top:577px;width:1px;height:27px;background:#c0c3c8;"></div>
<div style="position:absolute;left:636px;top:577px;width:1px;height:27px;background:#c0c3c8;"></div>
<div style="position:absolute;left:689px;top:577px;width:1px;height:27px;background:#c0c3c8;"></div>
<div style="position:absolute;left:756px;top:577px;width:1px;height:27px;background:#c0c3c8;"></div>
<div style="position:absolute;left:823px;top:577px;width:1px;height:27px;background:#c0c3c8;"></div>
<div style="position:absolute;left:892px;top:577px;width:1px;height:27px;background:#c0c3c8;"></div>
<div style="position:absolute;left:931px;top:577px;width:1px;height:27px;background:#c0c3c8;"></div>
<div style="position:absolute;left:970px;top:577px;width:1px;height:27px;background:#c0c3c8;"></div>
<div style="position:absolute;left:82px;top:578px;width:1px;height:25px;background:#7ac5b0;"></div>
<div class="t" style="left:2px;top:579px;width:80px;height:25px;line-height:25px;color:#fff;font-size:12px;font-weight:normal;">日职乙</div>
<div class="t" style="left:83px;top:579px;width:77px;height:25px;line-height:25px;color:#333;font-size:12px;font-weight:normal;">25-06-08</div>
<div class="t" style="left:161px;top:579px;width:113px;height:25px;line-height:25px;color:#137013;font-size:12px;font-weight:normal;">富山胜利</div>
<div class="t" style="left:275px;top:579px;width:91px;height:25px;line-height:25px;color:#333;font-size:12px;font-weight:normal;"><span style="color:#cc1111">0-1</span>(0-1)</div>
<div class="t" style="left:367px;top:579px;width:39px;height:25px;line-height:25px;color:#333;font-size:12px;font-weight:normal;">4-8</div>
<div class="t" style="left:407px;top:579px;width:94px;height:25px;line-height:25px;color:#333;font-size:12px;font-weight:normal;">水户蜀葵</div>
<div class="t" style="left:502px;top:579px;width:48px;height:25px;line-height:25px;color:#333;font-size:12px;font-weight:normal;">0.85</div>
<div class="t" style="left:551px;top:579px;width:85px;height:25px;line-height:25px;color:#333;font-size:12px;font-weight:normal;">受半球</div>
<div class="t" style="left:637px;top:579px;width:52px;height:25px;line-height:25px;color:#333;font-size:12px;font-weight:normal;">1.04</div>
<div class="t" style="left:690px;top:579px;width:66px;height:25px;line-height:25px;color:#333;font-size:12px;font-weight:normal;">3.66</div>
<div class="t" style="left:757px;top:579px;width:66px;height:25px;line-height:25px;color:#333;font-size:12px;font-weight:normal;">3.30</div>
<div class="t" style="left:824px;top:579px;width:68px;height:25px;line-height:25px;color:#333;font-size:12px;font-weight:normal;">1.95</div>
<div class="t" style="left:893px;top:579px;width:38px;height:25px;line-height:25px;color:#2a2aaa;font-size:12px;font-weight:normal;">负</div>
<div class="t" style="left:932px;top:579px;width:38px;height:25px;line-height:25px;color:#2a2aaa;font-size:12px;font-weight:normal;">输</div>
<div class="t" style="left:971px;top:579px;width:57px;height:25px;line-height:25px;color:#2a2aaa;font-size:12px;font-weight:normal;">小</div>
<div style="position:absolute;left:1px;top:604px;width:1028px;height:25px;background:#fff;"></div>
<div style="position:absolute;left:502px;top:604px;width:48px;height:25px;background:#fefaf6;"></div>
<div style="position:absolute;left:551px;top:604px;width:85px;height:25px;background:#fefaf6;"></div>
<div style="position:absolute;left:637px;top:604px;width:52px;height:25px;background:#fefaf6;"></div>
<div style="position:absolute;left:690px;top:604px;width:66px;height:25px;background:#f0f7fb;"></div>
<div style="position:absolute;left:757px;top:604px;width:66px;height:25px;background:#f0f7fb;"></div>
<div style="position:absolute;left:824px;top:604px;width:68px;height:25px;background:#f0f7fb;"></div>
<div style="position:absolute;left:2px;top:604px;width:80px;height:25px;background:#33c799;"></div>
<div style="position:absolute;left:1px;top:629px;width:1028px;height:1px;background:#c0c3c8;"></div>
<div style="position:absolute;left:2px;top:629px;width:80px;height:1px;background:#a6dcc6;"></div>
<div style="position:absolute;left:1px;top:603px;width:1px;height:27px;background:#c0c3c8;"></div>
<div style="position:absolute;left:82px;top:603px;width:1px;height:27px;background:#c0c3c8;"></div>
<div style="position:absolute;left:160px;top:603px;width:1px;height:27px;background:#c0c3c8;"></div>
<div style="position:absolute;left:274px;top:603px;width:1px;height:27px;background:#c0c3c8;"></div>
<div style="position:absolute;left:366px;top:603px;width:1px;height:27px;background:#c0c3c8;"></div>
<div style="position:absolute;left:406px;top:603px;width:1px;height:27px;background:#c0c3c8;"></div>
<div style="position:absolute;left:501px;top:603px;width:1px;height:27px;background:#c0c3c8;"></div>
<div style="position:absolute;left:550px;top:603px;width:1px;height:27px;background:#c0c3c8;"></div>
<div style="position:absolute;left:636px;top:603px;width:1px;height:27px;background:#c0c3c8;"></div>
<div style="position:absolute;left:689px;top:603px;width:1px;height:27px;background:#c0c3c8;"></div>
<div style="position:absolute;left:756px;top:603px;width:1px;height:27px;background:#c0c3c8;"></div>
<div style="position:absolute;left:823px;top:603px;width:1px;height:27px;background:#c0c3c8;"></div>
<div style="position:absolute;left:892px;top:603px;width:1px;height:27px;background:#c0c3c8;"></div>
<div style="position:absolute;left:931px;top:603px;width:1px;height:27px;background:#c0c3c8;"></div>
<div style="position:absolute;left:970px;top:603px;width:1px;height:27px;background:#c0c3c8;"></div>
<div style="position:absolute;left:82px;top:604px;width:1px;height:25px;background:#7ac5b0;"></div>
<div class="t" style="left:2px;top:605px;width:80px;height:25px;line-height:25px;color:#fff;font-size:12px;font-weight:normal;">日职乙</div>
<div class="t" style="left:83px;top:605px;width:77px;height:25px;line-height:25px;color:#333;font-size:12px;font-weight:normal;">25-05-31</div>
<div class="t" style="left:161px;top:605px;width:113px;height:25px;line-height:25px;color:#333;font-size:12px;font-weight:normal;">秋田蓝色闪电</div>
<div class="t" style="left:275px;top:605px;width:91px;height:25px;line-height:25px;color:#333;font-size:12px;font-weight:normal;"><span style="color:#cc1111">2-2</span>(0-2)</div>
<div class="t" style="left:367px;top:605px;width:39px;height:25px;line-height:25px;color:#333;font-size:12px;font-weight:normal;">8-1</div>
<div class="t" style="left:407px;top:605px;width:94px;height:25px;line-height:25px;color:#137013;font-size:12px;font-weight:normal;">富山胜利</div>
<div class="t" style="left:502px;top:605px;width:48px;height:25px;line-height:25px;color:#333;font-size:12px;font-weight:normal;">0.93</div>
<div class="t" style="left:551px;top:605px;width:85px;height:25px;line-height:25px;color:#333;font-size:12px;font-weight:normal;">平手</div>
<div class="t" style="left:637px;top:605px;width:52px;height:25px;line-height:25px;color:#333;font-size:12px;font-weight:normal;">0.96</div>
<div class="t" style="left:690px;top:605px;width:66px;height:25px;line-height:25px;color:#333;font-size:12px;font-weight:normal;">2.53</div>
<div class="t" style="left:757px;top:605px;width:66px;height:25px;line-height:25px;color:#333;font-size:12px;font-weight:normal;">2.98</div>
<div class="t" style="left:824px;top:605px;width:68px;height:25px;line-height:25px;color:#333;font-size:12px;font-weight:normal;">2.79</div>
<div class="t" style="left:893px;top:605px;width:38px;height:25px;line-height:25px;color:#1f881f;font-size:12px;font-weight:normal;">平</div>
<div class="t" style="left:932px;top:605px;width:38px;height:25px;line-height:25px;color:#1f881f;font-size:12px;font-weight:normal;">走</div>
<div class="t" style="left:971px;top:605px;width:57px;height:25px;line-height:25px;color:#cc1111;font-size:12px;font-weight:normal;">大</div>
<div style="position:absolute;left:1px;top:630px;width:1028px;height:25px;background:#f0f0f0;"></div>
<div style="position:absolute;left:502px;top:630px;width:48px;height:25px;background:#fefaf6;"></div>
<div style="position:absolute;left:551px;top:630px;width:85px;height:25px;background:#fefaf6;"></div>
<div style="position:absolute;left:637px;top:630px;width:52px;height:25px;background:#fefaf6;"></div>
<div style="position:absolute;left:690px;top:630px;width:66px;height:25px;background:#f0f7fb;"></div>
<div style="position:absolute;left:757px;top:630px;width:66px;height:25px;background:#f0f7fb;"></div>
<div style="position:absolute;left:824px;top:630px;width:68px;height:25px;background:#f0f7fb;"></div>
<div style="position:absolute;left:2px;top:630px;width:80px;height:25px;background:#003300;"></div>
<div style="position:absolute;left:1px;top:655px;width:1028px;height:1px;background:#c0c3c8;"></div>
<div style="position:absolute;left:2px;top:655px;width:80px;height:1px;background:#a6dcc6;"></div>
<div style="position:absolute;left:1px;top:629px;width:1px;height:27px;background:#c0c3c8;"></div>
<div style="position:absolute;left:82px;top:629px;width:1px;height:27px;background:#c0c3c8;"></div>
<div style="position:absolute;left:160px;top:629px;width:1px;height:27px;background:#c0c3c8;"></div>
<div style="position:absolute;left:274px;top:629px;width:1px;height:27px;background:#c0c3c8;"></div>
<div style="position:absolute;left:366px;top:629px;width:1px;height:27px;background:#c0c3c8;"></div>
<div style="position:absolute;left:406px;top:629px;width:1px;height:27px;background:#c0c3c8;"></div>
<div style="position:absolute;left:501px;top:629px;width:1px;height:27px;background:#c0c3c8;"></div>
<div style="position:absolute;left:550px;top:629px;width:1px;height:27px;background:#c0c3c8;"></div>
<div style="position:absolute;left:636px;top:629px;width:1px;height:27px;background:#c0c3c8;"></div>
<div style="position:absolute;left:689px;top:629px;width:1px;height:27px;background:#c0c3c8;"></div>
<div style="position:absolute;left:756px;top:629px;width:1px;height:27px;background:#c0c3c8;"></div>
<div style="position:absolute;left:823px;top:629px;width:1px;height:27px;background:#c0c3c8;"></div>
<div style="position:absolute;left:892px;top:629px;width:1px;height:27px;background:#c0c3c8;"></div>
<div style="position:absolute;left:931px;top:629px;width:1px;height:27px;background:#c0c3c8;"></div>
<div style="position:absolute;left:970px;top:629px;width:1px;height:27px;background:#c0c3c8;"></div>
<div style="position:absolute;left:82px;top:630px;width:1px;height:25px;background:#607b64;"></div>
<div class="t" style="left:2px;top:631px;width:80px;height:25px;line-height:25px;color:#fff;font-size:12px;font-weight:normal;">日皇杯</div>
<div class="t" style="left:83px;top:631px;width:77px;height:25px;line-height:25px;color:#333;font-size:12px;font-weight:normal;">25-05-25</div>
<div class="t" style="left:161px;top:631px;width:113px;height:25px;line-height:25px;color:#137013;font-size:12px;font-weight:normal;">富山胜利</div>
<div class="t" style="left:275px;top:631px;width:91px;height:25px;line-height:25px;color:#333;font-size:12px;font-weight:normal;"><span style="color:#cc1111">2-1</span>(0-1)</div>
<div class="t" style="left:367px;top:631px;width:39px;height:25px;line-height:25px;color:#333;font-size:12px;font-weight:normal;">2-8</div>
<div class="t" style="left:407px;top:631px;width:94px;height:25px;line-height:25px;color:#333;font-size:12px;font-weight:normal;">顺天堂大学</div>
<div class="t" style="left:893px;top:631px;width:38px;height:25px;line-height:25px;color:#cc1111;font-size:12px;font-weight:normal;">胜</div>
<div style="position:absolute;left:1px;top:656px;width:1028px;height:25px;background:#fff;"></div>
<div style="position:absolute;left:502px;top:656px;width:48px;height:25px;background:#fefaf6;"></div>
<div style="position:absolute;left:551px;top:656px;width:85px;height:25px;background:#fefaf6;"></div>
<div style="position:absolute;left:637px;top:656px;width:52px;height:25px;background:#fefaf6;"></div>
<div style="position:absolute;left:690px;top:656px;width:66px;height:25px;background:#f0f7fb;"></div>
<div style="position:absolute;left:757px;top:656px;width:66px;height:25px;background:#f0f7fb;"></div>
<div style="position:absolute;left:824px;top:656px;width:68px;height:25px;background:#f0f7fb;"></div>
<div style="position:absolute;left:2px;top:656px;width:80px;height:25px;background:#4f8a4f;"></div>
<div style="position:absolute;left:1px;top:681px;width:1028px;height:1px;background:#c0c3c8;"></div>
<div style="position:absolute;left:2px;top:681px;width:80px;height:1px;background:#a6dcc6;"></div>
<div style="position:absolute;left:1px;top:655px;width:1px;height:27px;background:#c0c3c8;"></div>
<div style="position:absolute;left:82px;top:655px;width:1px;height:27px;background:#c0c3c8;"></div>
<div style="position:absolute;left:160px;top:655px;width:1px;height:27px;background:#c0c3c8;"></div>
<div style="position:absolute;left:274px;top:655px;width:1px;height:27px;background:#c0c3c8;"></div>
<div style="position:absolute;left:366px;top:655px;width:1px;height:27px;background:#c0c3c8;"></div>
<div style="position:absolute;left:406px;top:655px;width:1px;height:27px;background:#c0c3c8;"></div>
<div style="position:absolute;left:501px;top:655px;width:1px;height:27px;background:#c0c3c8;"></div>
<div style="position:absolute;left:550px;top:655px;width:1px;height:27px;background:#c0c3c8;"></div>
<div style="position:absolute;left:636px;top:655px;width:1px;height:27px;background:#c0c3c8;"></div>
<div style="position:absolute;left:689px;top:655px;width:1px;height:27px;background:#c0c3c8;"></div>
<div style="position:absolute;left:756px;top:655px;width:1px;height:27px;background:#c0c3c8;"></div>
<div style="position:absolute;left:823px;top:655px;width:1px;height:27px;background:#c0c3c8;"></div>
<div style="position:absolute;left:892px;top:655px;width:1px;height:27px;background:#c0c3c8;"></div>
<div style="position:absolute;left:931px;top:655px;width:1px;height:27px;background:#c0c3c8;"></div>
<div style="position:absolute;left:970px;top:655px;width:1px;height:27px;background:#c0c3c8;"></div>
<div style="position:absolute;left:82px;top:656px;width:1px;height:25px;background:#88a68c;"></div>
<div class="t" style="left:2px;top:657px;width:80px;height:25px;line-height:25px;color:#fff;font-size:12px;font-weight:normal;">日联杯</div>
<div class="t" style="left:83px;top:657px;width:77px;height:25px;line-height:25px;color:#333;font-size:12px;font-weight:normal;">25-05-21</div>
<div class="t" style="left:161px;top:657px;width:113px;height:25px;line-height:25px;color:#137013;font-size:12px;font-weight:normal;">富山胜利</div>
<div class="t" style="left:275px;top:657px;width:91px;height:25px;line-height:25px;color:#333;font-size:12px;font-weight:normal;"><span style="color:#cc1111">1-2</span>(0-2)</div>
<div class="t" style="left:367px;top:657px;width:39px;height:25px;line-height:25px;color:#333;font-size:12px;font-weight:normal;">4-4</div>
<div class="t" style="left:407px;top:657px;width:94px;height:25px;line-height:25px;color:#333;font-size:12px;font-weight:normal;">福冈黄蜂</div>
<div class="t" style="left:502px;top:657px;width:48px;height:25px;line-height:25px;color:#333;font-size:12px;font-weight:normal;">0.88</div>
<div class="t" style="left:551px;top:657px;width:85px;height:25px;line-height:25px;color:#333;font-size:12px;font-weight:normal;">受平/半</div>
<div class="t" style="left:637px;top:657px;width:52px;height:25px;line-height:25px;color:#333;font-size:12px;font-weight:normal;">1.00</div>
<div class="t" style="left:690px;top:657px;width:66px;height:25px;line-height:25px;color:#333;font-size:12px;font-weight:normal;">3.41</div>
<div class="t" style="left:757px;top:657px;width:66px;height:25px;line-height:25px;color:#333;font-size:12px;font-weight:normal;">2.93</div>
<div class="t" style="left:824px;top:657px;width:68px;height:25px;line-height:25px;color:#333;font-size:12px;font-weight:normal;">2.19</div>
<div class="t" style="left:893px;top:657px;width:38px;height:25px;line-height:25px;color:#2a2aaa;font-size:12px;font-weight:normal;">负</div>
<div class="t" style="left:932px;top:657px;width:38px;height:25px;line-height:25px;color:#2a2aaa;font-size:12px;font-weight:normal;">输</div>
<div class="t" style="left:971px;top:657px;width:57px;height:25px;line-height:25px;color:#cc1111;font-size:12px;font-weight:normal;">大</div>
<div style="position:absolute;left:1px;top:682px;width:1028px;height:25px;background:#f0f0f0;"></div>
<div style="position:absolute;left:502px;top:682px;width:48px;height:25px;background:#fefaf6;"></div>
<div style="position:absolute;left:551px;top:682px;width:85px;height:25px;background:#fefaf6;"></div>
<div style="position:absolute;left:637px;top:682px;width:52px;height:25px;background:#fefaf6;"></div>
<div style="position:absolute;left:690px;top:682px;width:66px;height:25px;background:#f0f7fb;"></div>
<div style="position:absolute;left:757px;top:682px;width:66px;height:25px;background:#f0f7fb;"></div>
<div style="position:absolute;left:824px;top:682px;width:68px;height:25px;background:#f0f7fb;"></div>
<div style="position:absolute;left:2px;top:682px;width:80px;height:25px;background:#33c799;"></div>
<div style="position:absolute;left:1px;top:707px;width:1028px;height:1px;background:#c0c3c8;"></div>
<div style="position:absolute;left:2px;top:707px;width:80px;height:1px;background:#a6dcc6;"></div>
<div style="position:absolute;left:1px;top:681px;width:1px;height:27px;background:#c0c3c8;"></div>
<div style="position:absolute;left:82px;top:681px;width:1px;height:27px;background:#c0c3c8;"></div>
<div style="position:absolute;left:160px;top:681px;width:1px;height:27px;background:#c0c3c8;"></div>
<div style="position:absolute;left:274px;top:681px;width:1px;height:27px;background:#c0c3c8;"></div>
<div style="position:absolute;left:366px;top:681px;width:1px;height:27px;background:#c0c3c8;"></div>
<div style="position:absolute;left:406px;top:681px;width:1px;height:27px;background:#c0c3c8;"></div>
<div style="position:absolute;left:501px;top:681px;width:1px;height:27px;background:#c0c3c8;"></div>
<div style="position:absolute;left:550px;top:681px;width:1px;height:27px;background:#c0c3c8;"></div>
<div style="position:absolute;left:636px;top:681px;width:1px;height:27px;background:#c0c3c8;"></div>
<div style="position:absolute;left:689px;top:681px;width:1px;height:27px;background:#c0c3c8;"></div>
<div style="position:absolute;left:756px;top:681px;width:1px;height:27px;background:#c0c3c8;"></div>
<div style="position:absolute;left:823px;top:681px;width:1px;height:27px;background:#c0c3c8;"></div>
<div style="position:absolute;left:892px;top:681px;width:1px;height:27px;background:#c0c3c8;"></div>
<div style="position:absolute;left:931px;top:681px;width:1px;height:27px;background:#c0c3c8;"></div>
<div style="position:absolute;left:970px;top:681px;width:1px;height:27px;background:#c0c3c8;"></div>
<div style="position:absolute;left:82px;top:682px;width:1px;height:25px;background:#7ac5b0;"></div>
<div class="t" style="left:2px;top:683px;width:80px;height:25px;line-height:25px;color:#fff;font-size:12px;font-weight:normal;">日职乙</div>
<div class="t" style="left:83px;top:683px;width:77px;height:25px;line-height:25px;color:#333;font-size:12px;font-weight:normal;">25-05-17</div>
<div class="t" style="left:161px;top:683px;width:113px;height:25px;line-height:25px;color:#333;font-size:12px;font-weight:normal;">札幌冈萨多</div>
<div class="t" style="left:275px;top:683px;width:91px;height:25px;line-height:25px;color:#333;font-size:12px;font-weight:normal;"><span style="color:#cc1111">2-1</span>(0-1)</div>
<div class="t" style="left:367px;top:683px;width:39px;height:25px;line-height:25px;color:#333;font-size:12px;font-weight:normal;">5-4</div>
<div class="t" style="left:407px;top:683px;width:94px;height:25px;line-height:25px;color:#137013;font-size:12px;font-weight:normal;">富山胜利</div>
<div class="t" style="left:502px;top:683px;width:48px;height:25px;line-height:25px;color:#333;font-size:12px;font-weight:normal;">0.91</div>
<div class="t" style="left:551px;top:683px;width:85px;height:25px;line-height:25px;color:#333;font-size:12px;font-weight:normal;">半/一</div>
<div class="t" style="left:637px;top:683px;width:52px;height:25px;line-height:25px;color:#333;font-size:12px;font-weight:normal;">0.98</div>
<div class="t" style="left:690px;top:683px;width:66px;height:25px;line-height:25px;color:#333;font-size:12px;font-weight:normal;">1.70</div>
<div class="t" style="left:757px;top:683px;width:66px;height:25px;line-height:25px;color:#333;font-size:12px;font-weight:normal;">3.63</div>
<div class="t" style="left:824px;top:683px;width:68px;height:25px;line-height:25px;color:#333;font-size:12px;font-weight:normal;">4.53</div>
<div class="t" style="left:893px;top:683px;width:38px;height:25px;line-height:25px;color:#2a2aaa;font-size:12px;font-weight:normal;">负</div>
<div class="t" style="left:932px;top:683px;width:38px;height:25px;line-height:25px;color:#2a2aaa;font-size:12px;font-weight:normal;">输</div>
<div class="t" style="left:971px;top:683px;width:57px;height:25px;line-height:25px;color:#cc1111;font-size:12px;font-weight:normal;">大</div>
<div style="position:absolute;left:1px;top:708px;width:1028px;height:25px;background:#fff;"></div>
<div style="position:absolute;left:1px;top:707px;width:1px;height:26px;background:#c0c3c8;"></div>
<div style="position:absolute;left:1px;top:733px;width:1028px;height:1px;background:#c0c3c8;"></div>
<div class="t" style="left:1px;top:709px;width:1028px;height:25px;line-height:25px;color:#333;font-size:12px;font-weight:normal;letter-spacing:0.19px;">近<span style="color:#cc1111">10</span>场,胜4平1负5, 胜率:<span style="color:#cc1111">40%</span> 让胜率:<span style="color:#cc1111">33.3%</span> 大率:<span style="color:#cc1111">44.4%</span> 单率:<span style="color:#cc1111">80%</span></div>
</body></html>
